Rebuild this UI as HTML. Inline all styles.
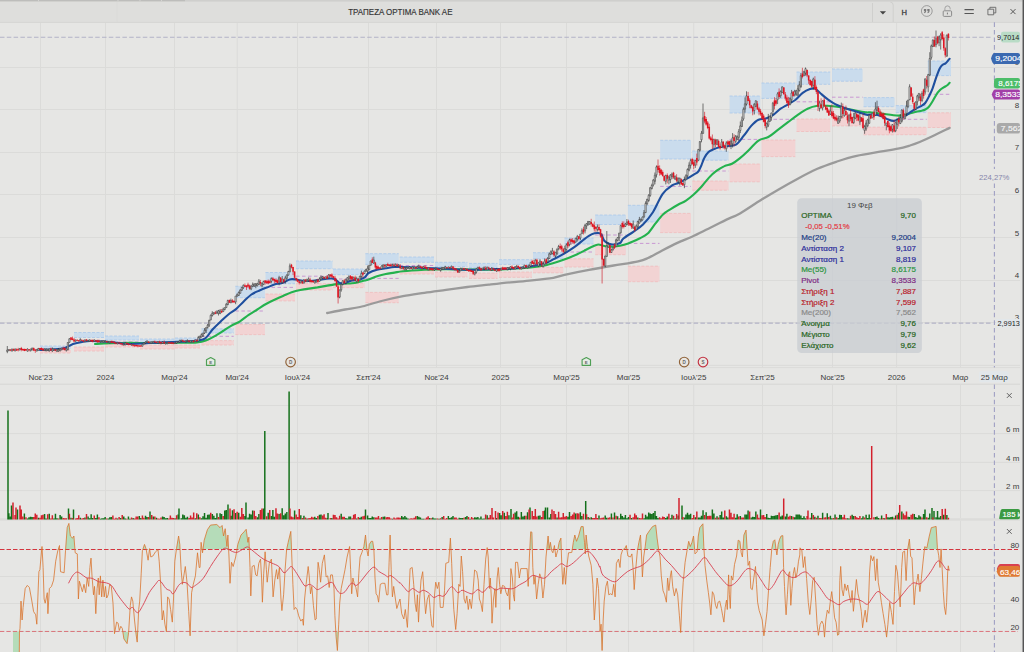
<!DOCTYPE html>
<html lang="el"><head><meta charset="utf-8"><title>ΤΡΑΠΕΖΑ OPTIMA BANK AE</title>
<style>
html,body{margin:0;padding:0;background:#e6e6e4;width:1024px;height:652px;overflow:hidden;font-family:"Liberation Sans", sans-serif;}
svg{display:block;position:absolute;left:0;top:0}
text{font-family:"Liberation Sans", sans-serif;}
</style></head><body>
<svg width="1024" height="652" viewBox="0 0 1024 652" font-family='"Liberation Sans", sans-serif'><rect x="0" y="0" width="1024" height="652" fill="#e6e6e4"/>
<rect x="0" y="0" width="1024" height="22.3" fill="#dededc"/>
<rect x="0" y="0" width="1024" height="1.6" fill="#cfcfcd"/>
<rect x="0" y="0" width="185" height="1.2" fill="#bdbdbb"/>
<path d="M40.5 22.3V367.6M40.5 384.3V518.2M40.5 520.7V652M105.5 22.3V367.6M105.5 384.3V518.2M105.5 520.7V652M174.5 22.3V367.6M174.5 384.3V518.2M174.5 520.7V652M237.2 22.3V367.6M237.2 384.3V518.2M237.2 520.7V652M297.5 22.3V367.6M297.5 384.3V518.2M297.5 520.7V652M368.5 22.3V367.6M368.5 384.3V518.2M368.5 520.7V652M436.5 22.3V367.6M436.5 384.3V518.2M436.5 520.7V652M500.5 22.3V367.6M500.5 384.3V518.2M500.5 520.7V652M566.5 22.3V367.6M566.5 384.3V518.2M566.5 520.7V652M628.5 22.3V367.6M628.5 384.3V518.2M628.5 520.7V652M693.7 22.3V367.6M693.7 384.3V518.2M693.7 520.7V652M762.5 22.3V367.6M762.5 384.3V518.2M762.5 520.7V652M832.5 22.3V367.6M832.5 384.3V518.2M832.5 520.7V652M896.6 22.3V367.6M896.6 384.3V518.2M896.6 520.7V652M960.5 22.3V367.6M960.5 384.3V518.2M960.5 520.7V652M0 322.5H1020.4M0 280.5H1020.4M0 237.5H1020.4M0 194.5H1020.4M0 152.5H1020.4M0 109.5H1020.4M0 67.5H1020.4M0 365.4H1020.4M0 367.6H1020.4M0 405.5H1020.4M0 433.6H1020.4M0 462.4H1020.4M0 490.6H1020.4M0 576.5H1020.4M0 603.5H1020.4" stroke="#dbdbd9" stroke-width="1" fill="none"/>
<path d="M0 384.3H1020.4" stroke="#dbdbd9" stroke-width="1.4"/>
<rect x="0" y="518.2" width="1020.4" height="2.5" fill="#dcdcda"/>
<path d="M0 22.4H1024" stroke="#d6d6d4" stroke-width="1"/>
<path d="M0 37.2H991M0 323.1H992" stroke="#b3b3c6" stroke-width="1.1" stroke-dasharray="4.5 2.3" fill="none"/>
<path d="M994.4 22.3V169M994.4 183.5V367.6M994.4 384.5V652" stroke="#a0a0c4" stroke-width="1.1" stroke-dasharray="4.6 3" fill="none"/>
<rect x="40.0" y="346.0" width="31.0" height="3.0" fill="#c4d9ee" fill-opacity="0.85"/>
<path d="M40.0 346.0h31.0M40.0 349.0h31.0" stroke="#a9c8ea" stroke-width="0.8" stroke-dasharray="3 1.5" fill="none"/>
<rect x="40.0" y="350.0" width="31.0" height="3.0" fill="#f3cfd0" fill-opacity="0.85"/>
<path d="M40.0 350.0h31.0M40.0 353.0h31.0" stroke="#f0bcbc" stroke-width="0.8" stroke-dasharray="3 1.5" fill="none"/>
<rect x="74.0" y="332.5" width="30.0" height="5.0" fill="#c4d9ee" fill-opacity="0.85"/>
<path d="M74.0 332.5h30.0M74.0 337.5h30.0" stroke="#a9c8ea" stroke-width="0.8" stroke-dasharray="3 1.5" fill="none"/>
<rect x="74.0" y="347.0" width="30.0" height="4.0" fill="#f3cfd0" fill-opacity="0.85"/>
<path d="M74.0 347.0h30.0M74.0 351.0h30.0" stroke="#f0bcbc" stroke-width="0.8" stroke-dasharray="3 1.5" fill="none"/>
<rect x="105.0" y="336.0" width="34.0" height="4.0" fill="#c4d9ee" fill-opacity="0.85"/>
<path d="M105.0 336.0h34.0M105.0 340.0h34.0" stroke="#a9c8ea" stroke-width="0.8" stroke-dasharray="3 1.5" fill="none"/>
<rect x="105.0" y="344.0" width="34.0" height="3.0" fill="#f3cfd0" fill-opacity="0.85"/>
<path d="M105.0 344.0h34.0M105.0 347.0h34.0" stroke="#f0bcbc" stroke-width="0.8" stroke-dasharray="3 1.5" fill="none"/>
<path d="M105.0 342.0h34.0" stroke="#c58fd0" stroke-width="0.9" stroke-dasharray="3.5 2.5" fill="none"/>
<rect x="140.0" y="339.0" width="34.5" height="3.5" fill="#c4d9ee" fill-opacity="0.85"/>
<path d="M140.0 339.0h34.5M140.0 342.5h34.5" stroke="#a9c8ea" stroke-width="0.8" stroke-dasharray="3 1.5" fill="none"/>
<rect x="140.0" y="345.0" width="34.5" height="4.0" fill="#f3cfd0" fill-opacity="0.85"/>
<path d="M140.0 345.0h34.5M140.0 349.0h34.5" stroke="#f0bcbc" stroke-width="0.8" stroke-dasharray="3 1.5" fill="none"/>
<rect x="175.0" y="338.0" width="25.0" height="3.0" fill="#c4d9ee" fill-opacity="0.85"/>
<path d="M175.0 338.0h25.0M175.0 341.0h25.0" stroke="#a9c8ea" stroke-width="0.8" stroke-dasharray="3 1.5" fill="none"/>
<rect x="175.0" y="345.0" width="25.0" height="3.0" fill="#f3cfd0" fill-opacity="0.85"/>
<path d="M175.0 345.0h25.0M175.0 348.0h25.0" stroke="#f0bcbc" stroke-width="0.8" stroke-dasharray="3 1.5" fill="none"/>
<rect x="201.5" y="328.8" width="32.2" height="4.2" fill="#c4d9ee" fill-opacity="0.85"/>
<path d="M201.5 328.8h32.2M201.5 333.0h32.2" stroke="#a9c8ea" stroke-width="0.8" stroke-dasharray="3 1.5" fill="none"/>
<rect x="201.5" y="340.6" width="32.2" height="4.4" fill="#f3cfd0" fill-opacity="0.85"/>
<path d="M201.5 340.6h32.2M201.5 345.0h32.2" stroke="#f0bcbc" stroke-width="0.8" stroke-dasharray="3 1.5" fill="none"/>
<path d="M201.5 336.3h32.2" stroke="#c58fd0" stroke-width="0.9" stroke-dasharray="3.5 2.5" fill="none"/>
<rect x="235.4" y="286.3" width="29.5" height="11.4" fill="#c4d9ee" fill-opacity="0.85"/>
<path d="M235.4 286.3h29.5M235.4 297.7h29.5" stroke="#a9c8ea" stroke-width="0.8" stroke-dasharray="3 1.5" fill="none"/>
<rect x="235.4" y="324.5" width="29.5" height="10.1" fill="#f3cfd0" fill-opacity="0.85"/>
<path d="M235.4 324.5h29.5M235.4 334.6h29.5" stroke="#f0bcbc" stroke-width="0.8" stroke-dasharray="3 1.5" fill="none"/>
<path d="M235.4 311.0h29.5" stroke="#c58fd0" stroke-width="0.9" stroke-dasharray="3.5 2.5" fill="none"/>
<rect x="265.5" y="272.5" width="29.5" height="11.2" fill="#c4d9ee" fill-opacity="0.85"/>
<path d="M265.5 272.5h29.5M265.5 283.7h29.5" stroke="#a9c8ea" stroke-width="0.8" stroke-dasharray="3 1.5" fill="none"/>
<rect x="265.5" y="294.0" width="29.5" height="6.9" fill="#f3cfd0" fill-opacity="0.85"/>
<path d="M265.5 294.0h29.5M265.5 300.9h29.5" stroke="#f0bcbc" stroke-width="0.8" stroke-dasharray="3 1.5" fill="none"/>
<path d="M265.5 287.4h29.5" stroke="#c58fd0" stroke-width="0.9" stroke-dasharray="3.5 2.5" fill="none"/>
<rect x="296.0" y="261.0" width="36.5" height="7.7" fill="#c4d9ee" fill-opacity="0.85"/>
<path d="M296.0 261.0h36.5M296.0 268.7h36.5" stroke="#a9c8ea" stroke-width="0.8" stroke-dasharray="3 1.5" fill="none"/>
<rect x="296.0" y="283.7" width="36.5" height="6.3" fill="#f3cfd0" fill-opacity="0.85"/>
<path d="M296.0 283.7h36.5M296.0 290.0h36.5" stroke="#f0bcbc" stroke-width="0.8" stroke-dasharray="3 1.5" fill="none"/>
<path d="M296.0 276.2h36.5" stroke="#c58fd0" stroke-width="0.9" stroke-dasharray="3.5 2.5" fill="none"/>
<rect x="333.0" y="269.0" width="31.7" height="5.7" fill="#c4d9ee" fill-opacity="0.85"/>
<path d="M333.0 269.0h31.7M333.0 274.7h31.7" stroke="#a9c8ea" stroke-width="0.8" stroke-dasharray="3 1.5" fill="none"/>
<rect x="333.0" y="283.3" width="31.7" height="4.3" fill="#f3cfd0" fill-opacity="0.85"/>
<path d="M333.0 283.3h31.7M333.0 287.6h31.7" stroke="#f0bcbc" stroke-width="0.8" stroke-dasharray="3 1.5" fill="none"/>
<path d="M333.0 279.0h31.7" stroke="#c58fd0" stroke-width="0.9" stroke-dasharray="3.5 2.5" fill="none"/>
<rect x="365.4" y="253.7" width="33.3" height="10.7" fill="#c4d9ee" fill-opacity="0.85"/>
<path d="M365.4 253.7h33.3M365.4 264.4h33.3" stroke="#a9c8ea" stroke-width="0.8" stroke-dasharray="3 1.5" fill="none"/>
<rect x="365.4" y="292.4" width="33.3" height="10.3" fill="#f3cfd0" fill-opacity="0.85"/>
<path d="M365.4 292.4h33.3M365.4 302.7h33.3" stroke="#f0bcbc" stroke-width="0.8" stroke-dasharray="3 1.5" fill="none"/>
<path d="M365.4 278.4h33.3" stroke="#c58fd0" stroke-width="0.9" stroke-dasharray="3.5 2.5" fill="none"/>
<rect x="399.7" y="257.0" width="34.3" height="5.3" fill="#c4d9ee" fill-opacity="0.85"/>
<path d="M399.7 257.0h34.3M399.7 262.3h34.3" stroke="#a9c8ea" stroke-width="0.8" stroke-dasharray="3 1.5" fill="none"/>
<rect x="399.7" y="269.8" width="34.3" height="4.2" fill="#f3cfd0" fill-opacity="0.85"/>
<path d="M399.7 269.8h34.3M399.7 274.0h34.3" stroke="#f0bcbc" stroke-width="0.8" stroke-dasharray="3 1.5" fill="none"/>
<path d="M399.7 265.5h34.3" stroke="#c58fd0" stroke-width="0.9" stroke-dasharray="3.5 2.5" fill="none"/>
<rect x="435.0" y="262.3" width="32.4" height="4.3" fill="#c4d9ee" fill-opacity="0.85"/>
<path d="M435.0 262.3h32.4M435.0 266.6h32.4" stroke="#a9c8ea" stroke-width="0.8" stroke-dasharray="3 1.5" fill="none"/>
<rect x="435.0" y="272.0" width="32.4" height="5.0" fill="#f3cfd0" fill-opacity="0.85"/>
<path d="M435.0 272.0h32.4M435.0 277.0h32.4" stroke="#f0bcbc" stroke-width="0.8" stroke-dasharray="3 1.5" fill="none"/>
<rect x="469.0" y="263.4" width="28.5" height="4.3" fill="#c4d9ee" fill-opacity="0.85"/>
<path d="M469.0 263.4h28.5M469.0 267.7h28.5" stroke="#a9c8ea" stroke-width="0.8" stroke-dasharray="3 1.5" fill="none"/>
<rect x="469.0" y="273.0" width="28.5" height="5.4" fill="#f3cfd0" fill-opacity="0.85"/>
<path d="M469.0 273.0h28.5M469.0 278.4h28.5" stroke="#f0bcbc" stroke-width="0.8" stroke-dasharray="3 1.5" fill="none"/>
<rect x="499.0" y="259.7" width="32.9" height="4.7" fill="#c4d9ee" fill-opacity="0.85"/>
<path d="M499.0 259.7h32.9M499.0 264.4h32.9" stroke="#a9c8ea" stroke-width="0.8" stroke-dasharray="3 1.5" fill="none"/>
<rect x="499.0" y="272.0" width="32.9" height="5.3" fill="#f3cfd0" fill-opacity="0.85"/>
<path d="M499.0 272.0h32.9M499.0 277.3h32.9" stroke="#f0bcbc" stroke-width="0.8" stroke-dasharray="3 1.5" fill="none"/>
<rect x="533.0" y="252.7" width="30.3" height="6.1" fill="#c4d9ee" fill-opacity="0.85"/>
<path d="M533.0 252.7h30.3M533.0 258.8h30.3" stroke="#a9c8ea" stroke-width="0.8" stroke-dasharray="3 1.5" fill="none"/>
<rect x="533.0" y="267.4" width="30.3" height="5.4" fill="#f3cfd0" fill-opacity="0.85"/>
<path d="M533.0 267.4h30.3M533.0 272.8h30.3" stroke="#f0bcbc" stroke-width="0.8" stroke-dasharray="3 1.5" fill="none"/>
<rect x="564.5" y="238.0" width="29.0" height="6.0" fill="#c4d9ee" fill-opacity="0.85"/>
<path d="M564.5 238.0h29.0M564.5 244.0h29.0" stroke="#a9c8ea" stroke-width="0.8" stroke-dasharray="3 1.5" fill="none"/>
<rect x="564.5" y="258.8" width="29.0" height="8.2" fill="#f3cfd0" fill-opacity="0.85"/>
<path d="M564.5 258.8h29.0M564.5 267.0h29.0" stroke="#f0bcbc" stroke-width="0.8" stroke-dasharray="3 1.5" fill="none"/>
<path d="M564.5 252.0h29.0" stroke="#c58fd0" stroke-width="0.9" stroke-dasharray="3.5 2.5" fill="none"/>
<rect x="595.2" y="215.0" width="30.7" height="9.5" fill="#c4d9ee" fill-opacity="0.85"/>
<path d="M595.2 215.0h30.7M595.2 224.5h30.7" stroke="#a9c8ea" stroke-width="0.8" stroke-dasharray="3 1.5" fill="none"/>
<rect x="595.2" y="245.3" width="30.7" height="9.4" fill="#f3cfd0" fill-opacity="0.85"/>
<path d="M595.2 245.3h30.7M595.2 254.7h30.7" stroke="#f0bcbc" stroke-width="0.8" stroke-dasharray="3 1.5" fill="none"/>
<path d="M595.2 235.0h30.7" stroke="#c58fd0" stroke-width="0.9" stroke-dasharray="3.5 2.5" fill="none"/>
<rect x="627.9" y="205.3" width="31.6" height="16.7" fill="#c4d9ee" fill-opacity="0.85"/>
<path d="M627.9 205.3h31.6M627.9 222.0h31.6" stroke="#a9c8ea" stroke-width="0.8" stroke-dasharray="3 1.5" fill="none"/>
<rect x="627.9" y="266.2" width="31.6" height="15.5" fill="#f3cfd0" fill-opacity="0.85"/>
<path d="M627.9 266.2h31.6M627.9 281.7h31.6" stroke="#f0bcbc" stroke-width="0.8" stroke-dasharray="3 1.5" fill="none"/>
<path d="M627.9 243.4h31.6" stroke="#c58fd0" stroke-width="0.9" stroke-dasharray="3.5 2.5" fill="none"/>
<rect x="660.2" y="140.3" width="30.8" height="18.7" fill="#c4d9ee" fill-opacity="0.85"/>
<path d="M660.2 140.3h30.8M660.2 159.0h30.8" stroke="#a9c8ea" stroke-width="0.8" stroke-dasharray="3 1.5" fill="none"/>
<rect x="660.2" y="213.4" width="30.8" height="19.2" fill="#f3cfd0" fill-opacity="0.85"/>
<path d="M660.2 213.4h30.8M660.2 232.6h30.8" stroke="#f0bcbc" stroke-width="0.8" stroke-dasharray="3 1.5" fill="none"/>
<path d="M660.2 186.4h30.8" stroke="#c58fd0" stroke-width="0.9" stroke-dasharray="3.5 2.5" fill="none"/>
<rect x="692.3" y="151.0" width="36.3" height="9.2" fill="#c4d9ee" fill-opacity="0.85"/>
<path d="M692.3 151.0h36.3M692.3 160.2h36.3" stroke="#a9c8ea" stroke-width="0.8" stroke-dasharray="3 1.5" fill="none"/>
<rect x="692.3" y="181.0" width="36.3" height="9.2" fill="#f3cfd0" fill-opacity="0.85"/>
<path d="M692.3 181.0h36.3M692.3 190.2h36.3" stroke="#f0bcbc" stroke-width="0.8" stroke-dasharray="3 1.5" fill="none"/>
<path d="M692.3 171.0h36.3" stroke="#c58fd0" stroke-width="0.9" stroke-dasharray="3.5 2.5" fill="none"/>
<rect x="729.6" y="96.0" width="30.6" height="17.0" fill="#c4d9ee" fill-opacity="0.85"/>
<path d="M729.6 96.0h30.6M729.6 113.0h30.6" stroke="#a9c8ea" stroke-width="0.8" stroke-dasharray="3 1.5" fill="none"/>
<rect x="729.6" y="164.0" width="30.6" height="17.8" fill="#f3cfd0" fill-opacity="0.85"/>
<path d="M729.6 164.0h30.6M729.6 181.8h30.6" stroke="#f0bcbc" stroke-width="0.8" stroke-dasharray="3 1.5" fill="none"/>
<path d="M729.6 139.4h30.6" stroke="#c58fd0" stroke-width="0.9" stroke-dasharray="3.5 2.5" fill="none"/>
<rect x="761.5" y="83.0" width="33.8" height="15.4" fill="#c4d9ee" fill-opacity="0.85"/>
<path d="M761.5 83.0h33.8M761.5 98.4h33.8" stroke="#a9c8ea" stroke-width="0.8" stroke-dasharray="3 1.5" fill="none"/>
<rect x="761.5" y="140.0" width="33.8" height="16.6" fill="#f3cfd0" fill-opacity="0.85"/>
<path d="M761.5 140.0h33.8M761.5 156.6h33.8" stroke="#f0bcbc" stroke-width="0.8" stroke-dasharray="3 1.5" fill="none"/>
<path d="M761.5 119.3h33.8" stroke="#c58fd0" stroke-width="0.9" stroke-dasharray="3.5 2.5" fill="none"/>
<rect x="796.6" y="72.0" width="33.6" height="12.3" fill="#c4d9ee" fill-opacity="0.85"/>
<path d="M796.6 72.0h33.6M796.6 84.3h33.6" stroke="#a9c8ea" stroke-width="0.8" stroke-dasharray="3 1.5" fill="none"/>
<rect x="796.6" y="119.0" width="33.6" height="12.5" fill="#f3cfd0" fill-opacity="0.85"/>
<path d="M796.6 119.0h33.6M796.6 131.5h33.6" stroke="#f0bcbc" stroke-width="0.8" stroke-dasharray="3 1.5" fill="none"/>
<path d="M796.6 101.8h33.6" stroke="#c58fd0" stroke-width="0.9" stroke-dasharray="3.5 2.5" fill="none"/>
<rect x="832.0" y="69.0" width="30.6" height="12.2" fill="#c4d9ee" fill-opacity="0.85"/>
<path d="M832.0 69.0h30.6M832.0 81.2h30.6" stroke="#a9c8ea" stroke-width="0.8" stroke-dasharray="3 1.5" fill="none"/>
<rect x="832.0" y="117.3" width="30.6" height="8.6" fill="#f3cfd0" fill-opacity="0.85"/>
<path d="M832.0 117.3h30.6M832.0 125.9h30.6" stroke="#f0bcbc" stroke-width="0.8" stroke-dasharray="3 1.5" fill="none"/>
<path d="M832.0 97.2h30.6" stroke="#c58fd0" stroke-width="0.9" stroke-dasharray="3.5 2.5" fill="none"/>
<rect x="863.6" y="97.6" width="31.0" height="9.1" fill="#c4d9ee" fill-opacity="0.85"/>
<path d="M863.6 97.6h31.0M863.6 106.7h31.0" stroke="#a9c8ea" stroke-width="0.8" stroke-dasharray="3 1.5" fill="none"/>
<rect x="863.6" y="127.2" width="31.0" height="7.6" fill="#f3cfd0" fill-opacity="0.85"/>
<path d="M863.6 127.2h31.0M863.6 134.8h31.0" stroke="#f0bcbc" stroke-width="0.8" stroke-dasharray="3 1.5" fill="none"/>
<rect x="895.8" y="105.6" width="30.9" height="7.0" fill="#c4d9ee" fill-opacity="0.85"/>
<path d="M895.8 105.6h30.9M895.8 112.6h30.9" stroke="#a9c8ea" stroke-width="0.8" stroke-dasharray="3 1.5" fill="none"/>
<rect x="895.8" y="127.3" width="30.9" height="7.4" fill="#f3cfd0" fill-opacity="0.85"/>
<path d="M895.8 127.3h30.9M895.8 134.7h30.9" stroke="#f0bcbc" stroke-width="0.8" stroke-dasharray="3 1.5" fill="none"/>
<path d="M895.8 119.3h30.9" stroke="#c58fd0" stroke-width="0.9" stroke-dasharray="3.5 2.5" fill="none"/>
<rect x="927.8" y="61.0" width="23.2" height="14.6" fill="#c4d9ee" fill-opacity="0.85"/>
<path d="M927.8 61.0h23.2M927.8 75.6h23.2" stroke="#a9c8ea" stroke-width="0.8" stroke-dasharray="3 1.5" fill="none"/>
<rect x="927.8" y="112.8" width="23.2" height="14.7" fill="#f3cfd0" fill-opacity="0.85"/>
<path d="M927.8 112.8h23.2M927.8 127.5h23.2" stroke="#f0bcbc" stroke-width="0.8" stroke-dasharray="3 1.5" fill="none"/>
<path d="M927.8 94.3h23.2" stroke="#c58fd0" stroke-width="0.9" stroke-dasharray="3.5 2.5" fill="none"/>
<path d="M327.2 313.0C330.2 312.4 339.5 310.5 345.0 309.5C350.5 308.5 353.9 308.4 360.0 307.0C366.1 305.6 374.3 302.8 381.5 301.0C388.7 299.2 395.9 297.6 403.0 296.2C410.1 294.8 417.2 293.9 424.4 292.8C431.6 291.7 438.8 290.8 446.0 289.8C453.2 288.8 460.2 287.9 467.4 287.0C474.5 286.1 481.7 285.4 488.9 284.6C496.1 283.8 503.2 283.0 510.4 282.3C517.6 281.6 524.8 281.1 531.9 280.3C539.0 279.6 547.9 278.7 553.3 277.8C558.7 276.9 558.5 276.1 564.5 274.8C570.5 273.5 580.9 271.4 589.1 269.9C597.3 268.3 605.4 266.9 613.6 265.5C621.8 264.1 632.5 262.6 638.2 261.3C643.9 260.1 643.9 259.9 648.0 258.0C652.1 256.1 657.8 252.7 662.7 250.2C667.6 247.7 672.5 245.2 677.4 242.9C682.3 240.7 686.3 239.3 692.0 236.7C697.7 234.0 706.0 229.8 711.8 227.0C717.5 224.2 721.8 221.9 726.5 219.6C731.2 217.3 734.2 216.7 740.0 213.4C745.8 210.1 754.6 203.9 761.0 200.0C767.4 196.1 772.1 193.2 778.2 189.7C784.3 186.1 791.3 182.2 797.8 178.7C804.3 175.2 810.9 171.7 817.4 168.8C823.9 165.9 830.5 163.7 837.0 161.5C843.5 159.3 849.5 157.4 856.7 155.8C863.9 154.2 873.1 152.9 880.0 151.7C886.9 150.5 893.0 149.7 898.0 148.7C903.0 147.7 906.4 146.6 910.0 145.5C913.6 144.4 915.6 143.7 919.7 142.0C923.8 140.3 929.5 137.7 934.5 135.3C939.5 133.0 947.1 129.1 949.6 127.9" stroke="#9a9a9a" stroke-width="2.3" fill="none" stroke-linejoin="round" stroke-linecap="round"/>
<path d="M95.0 344.0C99.2 343.8 110.8 343.2 120.0 343.0C129.2 342.8 140.0 343.0 150.0 343.0C160.0 343.0 172.2 342.9 180.0 342.8C187.8 342.7 192.7 342.8 197.0 342.4C201.3 342.0 202.9 341.6 205.8 340.6C208.7 339.6 211.5 337.9 214.4 336.3C217.3 334.7 220.2 332.8 223.0 331.0C225.8 329.2 228.7 327.2 231.5 325.6C234.3 324.0 237.1 323.1 240.0 321.3C242.9 319.5 245.8 316.9 248.7 314.9C251.6 312.9 254.4 311.3 257.3 309.5C260.2 307.7 263.1 305.6 266.0 304.0C268.9 302.4 271.7 301.1 274.5 299.8C277.3 298.5 280.1 297.2 283.0 296.0C285.9 294.8 288.8 293.3 291.7 292.3C294.6 291.3 297.4 290.6 300.3 290.0C303.2 289.4 306.1 289.0 309.0 288.6C311.9 288.2 314.7 287.8 317.5 287.4C320.3 286.9 323.1 286.4 326.0 285.9C328.9 285.4 331.8 284.8 334.7 284.4C337.6 284.0 340.4 283.9 343.3 283.7C346.2 283.5 349.4 283.6 351.9 283.3C354.4 283.1 356.2 282.7 358.3 282.2C360.4 281.7 363.0 280.9 364.7 280.5C366.4 280.1 366.6 280.2 368.6 279.5C370.7 278.8 374.1 277.2 377.0 276.3C379.9 275.4 382.9 274.6 385.8 274.0C388.7 273.4 391.5 273.1 394.4 272.6C397.3 272.2 398.0 271.8 403.0 271.3C408.0 270.8 417.2 270.2 424.4 269.8C431.6 269.4 438.8 269.2 446.0 269.2C453.2 269.2 460.2 269.5 467.4 269.6C474.5 269.7 483.5 269.6 488.9 269.6C494.3 269.6 493.0 269.8 500.0 269.4C507.0 269.0 523.0 268.2 530.7 267.5C538.4 266.8 540.9 266.3 546.0 265.2C551.1 264.1 556.3 262.4 561.4 260.6C566.5 258.8 572.9 256.2 576.7 254.5C580.5 252.8 581.9 251.9 584.4 250.6C586.9 249.3 589.7 247.8 592.0 246.8C594.3 245.8 596.2 244.6 598.2 244.5C600.2 244.4 602.2 245.6 604.3 246.0C606.3 246.4 607.9 246.9 610.5 246.8C613.1 246.8 617.0 246.3 620.0 245.7C623.0 245.1 626.0 244.2 628.3 243.4C630.6 242.6 632.0 241.9 634.0 241.0C636.0 240.1 637.7 239.4 640.0 238.2C642.3 237.0 645.2 236.0 647.7 233.6C650.2 231.2 652.8 226.9 655.3 223.7C657.8 220.5 660.4 216.8 663.0 214.4C665.6 212.0 668.1 210.8 670.7 209.1C673.3 207.4 675.9 205.9 678.4 204.5C680.9 203.1 683.5 202.3 686.0 200.6C688.5 198.9 691.1 196.8 693.7 194.5C696.3 192.2 698.9 189.6 701.4 186.8C703.9 184.0 706.5 180.3 709.0 177.6C711.5 174.9 714.1 172.6 716.7 170.7C719.3 168.8 721.9 167.2 724.4 166.1C726.9 164.9 729.5 165.1 732.0 163.8C734.5 162.5 737.1 160.5 739.7 158.4C742.3 156.3 744.3 154.5 747.4 151.5C750.5 148.5 755.0 143.0 758.5 140.6C762.0 138.2 765.0 138.8 768.3 137.0C771.6 135.2 774.9 132.1 778.2 129.6C781.5 127.1 784.7 124.7 788.0 122.2C791.3 119.7 794.5 117.0 797.8 114.8C801.1 112.5 804.3 110.2 807.6 108.7C810.9 107.2 814.1 106.3 817.4 105.8C820.7 105.3 823.9 105.6 827.2 105.8C830.5 106.0 833.7 106.2 837.0 106.7C840.3 107.2 843.6 108.0 846.9 108.7C850.2 109.4 853.4 110.1 856.7 110.7C860.0 111.3 864.3 112.2 866.5 112.4C868.7 112.7 868.2 112.1 870.0 112.2C871.8 112.3 874.9 112.9 877.4 113.2C879.9 113.5 882.2 113.7 884.7 114.0C887.2 114.3 889.6 114.7 892.1 115.0C894.6 115.3 897.0 115.7 899.5 115.6C902.0 115.5 904.3 115.0 906.8 114.4C909.2 113.8 911.7 112.8 914.2 112.2C916.7 111.6 919.8 111.2 921.6 110.8C923.4 110.3 924.0 110.2 925.2 109.5C926.4 108.8 927.7 108.1 928.9 106.7C930.1 105.3 931.4 103.2 932.6 101.2C933.8 99.2 935.1 96.6 936.3 94.7C937.5 92.8 938.8 91.3 940.0 90.1C941.2 88.9 942.5 88.2 943.7 87.4C944.9 86.6 946.3 86.0 947.3 85.2C948.3 84.4 949.2 83.2 949.6 82.8" stroke="#24b24e" stroke-width="2.1" fill="none" stroke-linejoin="round" stroke-linecap="round"/>
<path d="M40.0 350.0C42.5 349.9 50.8 349.6 55.0 349.3C59.2 349.0 62.5 348.6 65.0 348.0C67.5 347.4 68.3 346.2 70.0 345.5C71.7 344.8 71.7 344.2 75.0 343.5C78.3 342.8 84.2 341.2 90.0 341.0C95.8 340.8 103.3 341.5 110.0 342.0C116.7 342.5 123.3 343.8 130.0 344.0C136.7 344.2 141.7 343.4 150.0 343.0C158.3 342.6 173.3 342.0 180.0 341.7C186.7 341.4 187.1 341.5 190.0 341.3C192.9 341.1 195.1 341.1 197.7 340.6C200.2 340.1 202.8 340.2 205.3 338.3C207.9 336.4 210.4 331.8 213.0 329.0C215.6 326.2 218.1 323.8 220.7 321.4C223.3 319.0 225.8 316.6 228.4 314.5C231.0 312.4 233.4 311.3 236.0 309.1C238.6 306.9 241.1 303.8 243.7 301.4C246.3 299.0 248.8 296.3 251.4 294.5C254.0 292.7 256.4 291.8 259.0 290.7C261.6 289.6 264.1 288.6 266.7 287.6C269.3 286.6 271.8 285.3 274.4 284.5C276.9 283.7 279.4 283.9 282.0 283.0C284.6 282.1 287.4 280.0 289.7 279.4C292.0 278.8 293.5 279.2 296.0 279.5C298.5 279.8 301.8 280.8 304.6 281.0C307.4 281.2 310.1 281.0 313.0 280.7C315.9 280.4 318.9 279.8 321.8 279.4C324.7 279.0 328.2 278.6 330.4 278.5C332.5 278.4 333.3 278.3 334.7 279.0C336.1 279.7 337.6 281.9 339.0 282.6C340.4 283.3 341.2 283.7 343.3 283.3C345.4 282.9 349.4 281.1 351.9 280.5C354.4 279.9 356.2 280.3 358.3 279.8C360.4 279.3 363.0 278.4 364.7 277.3C366.4 276.2 366.6 274.2 368.6 273.0C370.7 271.8 374.1 270.6 377.0 269.8C379.9 269.0 382.9 268.8 385.8 268.3C388.7 267.8 391.5 267.2 394.4 267.0C397.3 266.8 398.0 266.8 403.0 267.0C408.0 267.2 417.2 267.7 424.4 268.0C431.6 268.3 438.8 268.4 446.0 268.7C453.2 269.0 460.2 269.7 467.4 269.8C474.5 269.9 483.5 269.3 488.9 269.2C494.3 269.1 495.6 269.1 500.0 269.0C504.4 268.9 510.2 268.8 515.3 268.3C520.4 267.9 525.6 267.2 530.7 266.3C535.8 265.4 542.2 264.1 546.0 262.9C549.8 261.7 551.1 260.4 553.7 259.1C556.3 257.8 558.9 256.6 561.4 255.2C563.9 253.8 566.5 252.2 569.0 250.6C571.5 248.9 574.1 247.2 576.7 245.3C579.3 243.4 581.9 241.0 584.4 239.1C586.9 237.2 589.7 235.1 592.0 234.1C594.3 233.1 596.7 232.9 598.2 233.0C599.8 233.1 600.3 233.2 601.3 234.5C602.3 235.8 603.0 239.2 604.3 240.7C605.6 242.2 607.4 243.1 608.9 243.7C610.4 244.3 611.6 244.6 613.5 244.5C615.4 244.4 618.4 244.0 620.0 243.0C621.6 242.0 621.2 240.4 623.4 238.5C625.6 236.6 630.0 234.1 633.3 231.8C636.6 229.5 639.7 227.8 643.0 224.5C646.3 221.2 649.6 217.3 652.9 212.2C656.2 207.1 659.4 198.3 662.7 193.8C666.0 189.3 669.9 187.0 672.5 185.2C675.1 183.4 676.1 184.0 678.4 183.0C680.6 182.0 683.5 180.6 686.0 179.2C688.5 177.8 691.7 175.9 693.7 174.6C695.8 173.3 697.0 173.1 698.3 171.5C699.6 169.9 700.4 167.6 701.4 165.3C702.4 163.0 703.2 159.9 704.4 157.7C705.5 155.5 707.0 153.6 708.3 152.3C709.6 151.0 710.3 150.8 712.1 150.0C713.9 149.2 716.5 147.9 719.3 147.2C722.1 146.5 726.1 146.5 729.0 146.0C731.9 145.5 733.9 146.0 736.4 144.3C738.9 142.6 741.3 138.8 743.8 135.7C746.3 132.6 748.8 128.6 751.2 125.9C753.7 123.2 756.0 121.0 758.5 119.8C761.0 118.6 763.4 119.3 765.9 118.5C768.4 117.7 770.8 116.4 773.3 114.8C775.8 113.2 778.1 110.5 780.6 108.7C783.1 107.0 785.5 105.8 788.0 104.3C790.5 102.8 792.8 101.9 795.3 100.0C797.8 98.1 800.2 94.6 802.7 92.8C805.2 91.0 808.0 89.7 810.0 89.0C812.0 88.3 813.4 88.0 815.0 88.6C816.6 89.2 817.9 91.1 819.9 92.8C821.9 94.5 824.4 96.9 827.2 98.9C830.1 100.9 833.7 103.4 837.0 105.0C840.3 106.6 843.6 107.6 846.9 108.7C850.2 109.8 853.4 110.7 856.7 111.7C860.0 112.7 864.3 114.3 866.5 114.8C868.7 115.3 868.2 114.5 870.0 114.5C871.8 114.5 875.2 114.6 877.4 115.0C879.5 115.4 881.1 116.0 882.9 116.8C884.7 117.6 886.6 118.9 888.4 119.6C890.2 120.3 892.0 121.1 893.9 120.9C895.8 120.8 897.6 119.5 899.5 118.7C901.4 117.9 903.2 117.0 905.0 115.9C906.8 114.8 908.7 113.4 910.5 112.2C912.3 111.0 914.1 109.7 916.0 108.6C917.9 107.5 920.1 106.7 921.6 105.8C923.1 104.9 924.0 104.5 925.2 103.0C926.4 101.5 927.7 99.0 928.9 96.6C930.1 94.1 931.4 91.5 932.6 88.3C933.8 85.1 935.1 80.6 936.3 77.2C937.5 73.8 938.9 70.1 940.0 68.0C941.1 65.9 941.8 65.5 942.7 64.7C943.6 63.9 944.6 64.1 945.5 63.4C946.4 62.7 947.6 61.1 948.3 60.3C949.0 59.5 949.4 59.0 949.6 58.8" stroke="#1f4f9e" stroke-width="2.1" fill="none" stroke-linejoin="round" stroke-linecap="round"/>
<path d="M7.3 346.0V353.2M8.9 349.4V350.9M12.0 348.4V351.7M15.1 348.4V351.3M19.7 348.4V350.2M27.5 348.4V351.5M30.6 348.8V351.4M32.1 347.5V350.1M36.8 349.2V351.4M38.4 347.9V350.6M44.6 348.3V350.9M46.1 348.2V351.3M47.7 348.8V350.7M49.2 348.4V351.8M52.3 347.4V352.1M53.9 348.5V350.8M57.0 349.0V352.1M58.5 348.1V351.8M60.1 348.3V351.5M61.7 348.0V350.3M66.3 348.4V351.6M67.9 342.3V350.6M69.4 338.1V342.5M75.6 339.6V341.7M80.3 338.2V341.5M84.9 339.7V342.4M88.1 340.1V341.7M89.6 339.5V341.8M94.3 339.6V341.5M100.5 340.9V342.4M102.0 340.2V342.3M103.6 340.6V342.6M105.1 340.3V342.3M108.2 340.8V342.8M109.8 341.0V343.5M117.6 342.3V344.3M123.8 344.0V345.5M125.3 342.5V345.4M131.5 343.4V345.5M142.4 344.1V346.4M144.0 342.4V344.4M145.5 341.2V344.1M147.1 340.7V342.7M150.2 341.7V343.5M151.7 341.4V343.5M153.3 341.0V343.0M157.9 341.3V343.5M162.6 341.2V343.9M165.7 342.2V344.6M167.3 342.1V344.4M175.0 342.0V344.0M176.6 341.1V343.8M178.1 341.4V342.9M179.7 339.7V342.4M181.2 339.7V341.6M185.9 340.6V342.7M187.4 339.3V341.8M190.6 340.5V342.7M192.1 340.5V342.4M195.2 339.4V341.9M198.3 335.9V341.1M199.9 335.8V339.0M201.4 333.4V337.5M203.0 333.0V336.9M204.5 328.1V334.0M206.1 327.4V333.0M207.6 324.0V328.5M209.2 319.7V327.0M210.7 314.5V320.3M212.3 311.2V316.6M213.8 312.3V314.9M217.0 310.2V314.1M218.5 309.9V315.5M220.1 309.0V314.2M223.2 307.7V311.8M224.7 307.6V310.3M226.3 303.1V307.7M227.8 299.7V305.3M230.9 298.6V303.4M235.6 296.0V304.2M237.1 293.4V296.4M238.7 291.5V295.7M240.2 289.3V293.4M241.8 286.9V291.0M243.4 284.4V288.9M251.1 285.3V290.2M252.7 282.5V287.2M254.2 283.5V286.9M255.8 283.1V288.2M257.3 282.8V286.5M258.9 279.0V284.9M262.0 282.7V287.3M263.5 280.8V284.9M271.3 277.3V283.2M279.1 275.8V285.3M282.2 276.0V283.9M285.3 275.9V283.7M286.8 274.4V279.7M288.4 270.8V275.4M289.9 263.5V271.9M300.8 280.3V283.7M303.9 279.2V283.3M307.0 278.6V282.3M308.6 277.3V281.5M314.8 280.4V283.5M316.3 279.4V282.8M319.5 277.2V281.9M321.0 275.4V280.2M322.6 276.2V278.8M325.7 276.7V278.9M328.8 274.0V278.1M339.6 289.5V298.3M341.2 284.3V291.7M342.7 280.1V285.4M345.9 278.6V284.3M347.4 277.2V281.4M349.0 275.2V281.2M353.6 276.7V279.2M356.7 276.7V282.5M359.8 275.9V280.9M361.4 270.6V277.9M364.5 270.5V274.0M366.0 268.7V271.5M367.6 265.6V273.7M369.1 264.9V270.1M370.7 260.7V265.8M373.8 256.7V264.0M381.6 265.3V269.3M383.1 264.4V268.0M386.2 264.3V267.0M392.4 263.6V266.3M395.5 263.6V266.5M398.7 264.0V266.8M401.8 266.8V269.1M404.9 267.5V270.4M406.4 266.7V270.1M408.0 267.0V268.9M409.5 266.2V269.2M412.6 266.4V269.5M414.2 266.5V268.2M417.3 265.5V268.6M418.8 264.6V268.1M423.5 265.9V268.6M428.2 267.6V270.4M434.4 268.2V271.0M435.9 267.8V269.8M440.6 268.2V271.7M442.1 266.9V270.0M443.7 266.9V269.9M445.2 265.8V268.9M448.4 266.6V268.6M451.5 265.6V268.1M459.2 269.5V272.5M460.8 267.5V271.0M462.3 267.9V269.8M465.4 268.4V270.1M474.8 272.0V275.4M476.3 268.4V273.6M477.9 266.9V269.0M482.5 268.0V269.8M484.1 266.4V270.1M487.2 266.7V269.8M491.8 267.0V270.9M496.5 268.4V271.7M501.2 267.7V270.4M507.4 267.3V270.3M508.9 267.1V269.4M510.5 266.3V270.3M515.1 266.0V269.3M516.7 264.8V268.7M521.3 267.6V269.4M522.9 266.8V269.0M524.4 264.7V268.5M527.6 265.9V268.5M529.1 264.1V267.8M530.7 262.0V266.7M535.3 258.9V264.6M538.4 262.0V267.0M540.0 259.2V265.5M543.1 261.7V267.5M544.6 258.5V264.6M547.7 257.0V263.2M549.3 252.6V258.8M550.8 250.4V254.9M552.4 247.9V254.5M555.5 251.9V257.4M557.1 248.2V254.4M558.6 244.9V250.3M564.8 245.7V252.7M566.4 243.2V250.8M569.5 238.7V246.3M575.7 237.8V242.9M577.3 234.9V241.5M580.4 234.0V240.1M581.9 228.4V233.8M585.0 223.8V233.4M586.6 223.2V229.1M588.1 221.1V225.5M589.7 221.2V224.6M597.4 224.5V231.5M605.2 255.7V267.3M606.8 231.0V256.8M608.3 242.4V247.1M611.4 248.7V252.8M613.0 247.0V250.5M616.1 238.7V246.9M617.6 237.0V241.3M619.2 232.8V241.3M620.7 224.7V233.7M625.4 223.2V227.0M626.9 219.0V225.2M633.2 220.5V229.0M636.3 224.4V229.6M637.8 220.7V227.7M639.4 216.9V223.4M640.9 218.5V222.1M642.5 216.5V220.7M644.0 210.0V218.1M645.6 201.3V212.8M647.1 198.9V205.2M648.7 194.2V201.9M650.2 187.3V196.8M651.8 183.7V189.4M653.3 179.1V186.5M654.9 172.5V184.3M656.5 165.4V177.5M665.8 174.6V184.4M668.9 175.7V184.3M670.4 174.2V183.0M672.0 172.5V179.1M675.1 175.7V179.9M678.2 177.4V182.8M679.7 177.7V185.5M684.4 176.6V188.2M686.0 174.2V180.1M687.5 168.4V177.3M689.1 162.3V171.4M690.6 158.7V168.6M695.3 159.7V167.9M698.4 149.2V161.2M699.9 141.0V151.7M701.5 130.9V142.3M703.0 103.5V133.7M713.9 138.6V148.0M717.0 139.0V145.2M721.7 139.0V147.8M726.3 141.2V151.8M731.0 140.0V149.1M732.6 133.1V147.5M735.7 135.0V143.1M737.2 135.4V140.2M738.8 129.1V141.0M740.3 121.5V133.1M741.9 116.5V126.9M743.4 107.4V120.7M745.0 97.4V112.6M746.5 91.3V105.6M754.3 103.1V114.5M755.8 100.3V106.8M766.7 122.3V130.4M768.3 113.9V127.1M769.8 115.8V121.8M771.4 112.6V120.7M772.9 101.9V114.7M777.6 92.2V104.1M780.7 90.3V97.9M782.2 86.5V92.8M790.0 97.3V105.3M791.6 89.9V102.7M794.7 89.8V96.4M796.2 90.0V96.1M797.8 85.2V96.1M799.3 81.2V91.6M800.9 73.1V87.8M804.0 70.7V75.9M805.5 67.5V75.6M813.3 77.6V89.7M819.5 100.7V111.5M822.6 100.5V110.5M830.4 106.6V115.0M838.2 115.6V123.8M839.7 116.2V122.8M841.3 102.6V118.5M844.4 108.7V116.7M849.0 113.9V126.3M853.7 112.8V123.9M855.2 111.7V119.3M859.9 112.4V124.9M864.6 124.8V133.8M866.1 120.2V130.8M867.7 118.7V127.2M869.2 114.2V123.6M872.3 113.0V118.2M875.4 102.2V115.5M877.0 100.7V114.0M886.3 122.9V130.3M892.5 124.1V132.5M895.6 122.4V132.2M897.2 118.6V129.0M900.3 114.0V124.1M901.8 109.3V122.5M904.9 113.2V119.1M906.5 100.8V116.2M908.0 99.9V108.2M909.6 84.3V100.1M915.8 101.1V110.2M917.4 94.8V105.5M918.9 92.9V100.8M922.0 91.3V102.2M925.1 78.1V94.6M928.2 73.9V92.2M929.8 52.2V76.1M931.3 44.5V59.6M932.9 39.3V47.1M936.0 30.5V47.3M939.1 35.6V46.2M940.7 33.2V49.5M946.9 34.5V57.0" stroke="#2e2e2e" stroke-width="0.65" fill="none"/>
<path d="M10.4 349.3V351.2M13.5 348.5V350.9M16.6 348.4V351.0M18.2 347.8V351.4M21.3 346.9V351.3M22.8 348.5V350.7M24.4 348.6V351.2M25.9 348.8V350.8M29.0 349.1V351.5M33.7 347.4V351.1M35.3 349.4V352.8M39.9 347.9V349.9M41.5 347.4V350.0M43.0 348.4V350.7M50.8 347.7V350.9M55.4 349.2V351.2M63.2 346.6V350.0M64.8 346.8V350.6M71.0 337.0V340.3M72.5 336.6V340.3M74.1 338.1V342.2M77.2 339.1V341.1M78.7 340.1V341.5M81.8 339.3V341.1M83.4 339.8V342.1M86.5 339.1V341.1M91.2 339.5V341.6M92.7 339.4V342.3M95.8 339.9V342.0M97.4 339.7V342.8M98.9 339.6V342.7M106.7 340.9V342.6M111.4 340.6V343.0M112.9 340.6V342.8M114.5 341.3V343.7M116.0 342.0V344.1M119.1 342.1V343.9M120.7 342.7V344.6M122.2 342.7V345.6M126.9 342.2V344.9M128.4 343.4V345.4M130.0 344.0V345.2M133.1 344.2V346.4M134.6 344.6V346.6M136.2 344.7V346.4M137.8 345.0V347.2M139.3 345.2V346.8M140.9 345.0V347.0M148.6 341.2V343.2M154.8 340.5V342.6M156.4 341.2V343.2M159.5 340.7V343.6M161.0 341.6V344.6M164.2 340.4V344.0M168.8 341.7V343.7M170.4 342.5V344.0M171.9 341.9V344.1M173.5 342.6V344.2M182.8 339.5V342.2M184.3 340.8V342.1M189.0 340.2V342.5M193.7 340.5V342.7M196.8 339.2V342.4M215.4 310.9V314.2M221.6 309.0V312.9M229.4 299.5V303.0M232.5 299.2V302.7M234.0 300.1V302.6M244.9 283.5V287.0M246.5 285.2V290.0M248.0 282.7V287.9M249.6 284.6V289.7M260.4 279.9V286.2M265.1 280.0V284.7M266.7 280.1V284.0M268.2 279.5V284.3M269.8 279.8V283.6M272.9 277.0V280.7M274.4 278.6V283.4M276.0 278.3V283.1M277.5 279.5V283.5M280.6 277.0V282.6M283.7 278.8V283.3M291.5 263.9V268.4M293.1 266.8V275.1M294.6 271.3V278.6M296.2 277.6V281.5M297.7 278.8V282.3M299.3 280.4V284.4M302.4 281.0V284.0M305.5 279.3V282.3M310.1 277.7V282.8M311.7 280.1V282.4M313.2 280.4V282.8M317.9 278.7V283.6M324.1 276.4V278.7M327.2 275.1V279.0M330.3 274.1V276.7M331.9 273.4V278.2M333.4 275.9V278.2M335.0 275.9V281.8M336.5 278.5V286.8M338.1 285.2V303.5M344.3 278.9V283.4M350.5 275.0V280.2M352.1 276.1V281.4M355.2 275.7V281.4M358.3 278.4V282.6M362.9 272.4V277.5M372.3 257.3V263.2M375.4 261.8V269.4M376.9 264.8V269.8M378.5 265.7V269.1M380.0 267.2V269.3M384.7 264.1V268.1M387.8 262.7V266.4M389.3 264.0V266.6M390.9 263.5V266.4M394.0 263.3V266.7M397.1 263.4V266.9M400.2 264.1V269.2M403.3 266.0V269.9M411.1 267.0V268.9M415.7 266.9V269.1M420.4 266.0V267.6M422.0 266.1V269.7M425.1 265.3V268.8M426.6 266.6V269.7M429.7 267.3V270.7M431.3 268.0V270.4M432.8 267.9V270.6M437.5 268.1V270.2M439.0 268.9V270.6M446.8 266.9V268.6M449.9 266.8V268.7M453.0 266.1V269.9M454.6 267.7V270.5M456.1 268.1V271.3M457.7 269.6V272.7M463.9 267.8V270.0M467.0 268.0V270.9M468.5 269.8V271.9M470.1 269.3V271.9M471.6 270.0V272.0M473.2 270.2V275.0M479.4 266.4V269.5M481.0 267.7V270.8M485.6 266.3V270.0M488.7 266.7V269.3M490.3 268.4V271.0M493.4 267.9V270.4M494.9 268.8V271.2M498.0 268.3V271.9M499.6 268.3V271.4M502.7 266.7V270.0M504.3 267.4V269.7M505.8 267.4V269.7M512.0 265.4V268.5M513.6 266.9V269.8M518.2 265.3V268.4M519.8 266.8V269.8M526.0 264.7V268.4M532.2 259.8V263.9M533.8 259.8V266.7M536.9 258.7V264.9M541.5 261.1V267.0M546.2 258.3V264.3M554.0 250.3V256.9M560.2 243.5V250.0M561.7 244.8V251.7M563.3 247.9V253.4M567.9 240.8V248.0M571.0 238.3V244.7M572.6 238.1V243.6M574.1 240.3V244.1M578.8 235.9V240.4M583.5 226.7V234.5M591.2 218.8V226.6M592.8 223.0V227.3M594.3 221.5V231.5M595.9 226.0V231.9M599.0 224.3V231.2M600.5 228.8V237.7M602.1 233.4V283.5M603.7 258.5V266.3M609.9 245.0V253.2M614.5 243.5V249.0M622.3 221.4V228.5M623.8 221.4V228.4M628.5 219.7V225.9M630.1 222.3V225.8M631.6 223.2V229.0M634.7 225.8V231.6M658.0 159.5V172.4M659.6 165.4V175.6M661.1 168.9V174.8M662.7 170.4V176.6M664.2 175.3V181.4M667.3 173.4V183.3M673.5 171.9V178.8M676.6 174.2V182.2M681.3 178.4V184.8M682.9 182.6V185.8M692.2 157.8V165.0M693.7 159.4V169.2M696.8 153.6V165.6M704.6 111.8V123.3M706.1 117.0V125.6M707.7 121.0V129.2M709.3 123.8V139.6M710.8 136.2V141.3M712.4 134.5V149.0M715.5 138.8V147.2M718.6 139.5V147.2M720.1 143.5V149.6M723.2 141.0V148.7M724.8 144.4V149.6M727.9 140.3V145.0M729.4 140.7V147.3M734.1 134.3V146.2M748.1 91.9V101.3M749.6 98.3V108.2M751.2 104.8V108.7M752.7 105.8V115.3M757.4 101.0V109.7M759.0 106.9V115.3M760.5 108.9V115.8M762.1 112.1V119.5M763.6 114.2V122.4M765.2 117.7V128.3M774.5 97.2V109.4M776.0 98.2V105.4M779.1 88.4V98.9M783.8 87.1V94.6M785.4 92.0V100.6M786.9 95.3V103.7M788.5 96.9V107.9M793.1 91.0V96.9M802.4 67.8V78.4M807.1 69.5V77.2M808.6 75.2V83.8M810.2 79.2V85.9M811.8 80.5V88.0M814.9 76.2V90.1M816.4 85.4V94.2M818.0 90.8V111.0M821.1 98.3V109.0M824.2 97.7V106.5M825.7 105.1V110.2M827.3 106.5V113.1M828.8 109.3V115.9M831.9 104.4V117.5M833.5 110.9V119.2M835.0 114.2V121.1M836.6 115.3V121.4M842.8 103.5V118.3M845.9 105.6V115.7M847.5 112.3V123.5M850.6 110.0V121.3M852.1 116.7V123.7M856.8 112.8V121.1M858.3 114.1V120.8M861.4 117.0V121.9M863.0 113.6V129.3M870.8 114.4V119.0M873.9 110.3V119.9M878.5 106.3V112.5M880.1 109.5V117.1M881.6 111.7V117.2M883.2 112.7V119.5M884.7 113.0V126.1M887.9 120.7V127.6M889.4 122.6V133.3M891.0 124.4V132.0M894.1 120.2V132.3M898.7 116.8V126.5M903.4 108.6V119.4M911.1 87.1V96.9M912.7 93.4V103.8M914.3 102.1V110.6M920.5 93.7V105.0M923.6 88.7V98.6M926.7 76.0V88.5M934.4 36.5V46.8M937.5 35.9V44.3M942.2 31.0V40.4M943.8 34.2V50.8M945.3 47.3V57.5M948.4 33.3V40.5" stroke="#d01c28" stroke-width="0.65" fill="none"/>
<path d="M6.68 350.0h1.24V351.5h-1.24zM8.23 349.5h1.24V350.7h-1.24zM11.34 349.3h1.24V350.8h-1.24zM14.45 349.1h1.24V350.9h-1.24zM19.10 348.5h1.24V350.0h-1.24zM26.87 349.0h1.24V351.1h-1.24zM29.98 349.1h1.24V350.7h-1.24zM31.53 348.3h1.24V350.0h-1.24zM36.19 349.4h1.24V351.0h-1.24zM37.74 348.5h1.24V350.3h-1.24zM43.95 349.2h1.24V350.6h-1.24zM45.50 349.1h1.24V350.8h-1.24zM47.06 349.3h1.24V350.6h-1.24zM48.61 348.8h1.24V350.8h-1.24zM51.72 349.1h1.24V350.9h-1.24zM53.27 348.8h1.24V350.3h-1.24zM56.38 349.3h1.24V351.4h-1.24zM57.93 349.4h1.24V350.9h-1.24zM59.48 348.6h1.24V350.7h-1.24zM61.03 348.2h1.24V349.7h-1.24zM65.69 348.6h1.24V350.3h-1.24zM67.25 342.5h1.24V349.5h-1.24zM68.80 338.8h1.24V342.3h-1.24zM75.01 340.0h1.24V341.2h-1.24zM79.67 339.5h1.24V341.0h-1.24zM84.33 339.8h1.24V341.4h-1.24zM87.44 340.2h1.24V341.3h-1.24zM88.99 339.8h1.24V341.3h-1.24zM93.65 339.9h1.24V341.3h-1.24zM99.86 341.2h1.24V342.1h-1.24zM101.41 340.9h1.24V342.2h-1.24zM102.97 340.9h1.24V342.2h-1.24zM104.52 340.9h1.24V341.8h-1.24zM107.62 341.5h1.24V342.6h-1.24zM109.18 341.3h1.24V342.8h-1.24zM116.94 342.5h1.24V343.8h-1.24zM123.15 344.2h1.24V345.0h-1.24zM124.71 343.2h1.24V344.7h-1.24zM130.92 344.3h1.24V345.1h-1.24zM141.79 344.3h1.24V346.2h-1.24zM143.34 343.0h1.24V344.2h-1.24zM144.90 342.1h1.24V343.0h-1.24zM146.45 340.9h1.24V342.3h-1.24zM149.56 341.9h1.24V343.3h-1.24zM151.11 341.8h1.24V343.3h-1.24zM152.66 341.4h1.24V342.7h-1.24zM157.32 341.5h1.24V342.9h-1.24zM161.98 342.0h1.24V343.3h-1.24zM165.09 342.7h1.24V343.8h-1.24zM166.64 342.5h1.24V343.4h-1.24zM174.40 342.6h1.24V343.6h-1.24zM175.96 341.8h1.24V343.0h-1.24zM177.51 341.7h1.24V342.6h-1.24zM179.06 340.6h1.24V342.0h-1.24zM180.62 340.2h1.24V341.0h-1.24zM185.27 340.8h1.24V341.8h-1.24zM186.83 340.5h1.24V341.3h-1.24zM189.93 340.8h1.24V342.2h-1.24zM191.49 340.9h1.24V342.2h-1.24zM194.59 340.0h1.24V341.5h-1.24zM197.70 337.5h1.24V340.9h-1.24zM199.25 336.2h1.24V337.9h-1.24zM200.80 334.7h1.24V337.0h-1.24zM202.36 333.1h1.24V336.1h-1.24zM203.91 330.3h1.24V333.1h-1.24zM205.46 327.6h1.24V330.9h-1.24zM207.02 325.2h1.24V327.3h-1.24zM208.57 320.4h1.24V325.1h-1.24zM210.12 315.3h1.24V319.9h-1.24zM211.68 313.3h1.24V315.5h-1.24zM213.23 312.6h1.24V314.0h-1.24zM216.33 311.9h1.24V313.2h-1.24zM217.89 310.9h1.24V313.4h-1.24zM219.44 310.8h1.24V313.5h-1.24zM222.55 309.3h1.24V311.6h-1.24zM224.10 307.7h1.24V309.5h-1.24zM225.65 304.2h1.24V307.6h-1.24zM227.21 300.5h1.24V304.5h-1.24zM230.31 300.5h1.24V302.5h-1.24zM234.97 296.1h1.24V302.0h-1.24zM236.52 294.6h1.24V296.3h-1.24zM238.08 292.4h1.24V295.5h-1.24zM239.63 290.0h1.24V293.3h-1.24zM241.18 287.4h1.24V290.2h-1.24zM242.74 285.3h1.24V287.8h-1.24zM250.50 286.0h1.24V289.0h-1.24zM252.05 284.6h1.24V286.3h-1.24zM253.61 283.9h1.24V286.1h-1.24zM255.16 283.9h1.24V285.8h-1.24zM256.71 283.7h1.24V285.7h-1.24zM258.27 281.1h1.24V284.5h-1.24zM261.37 283.0h1.24V285.9h-1.24zM262.92 281.4h1.24V284.6h-1.24zM270.69 278.5h1.24V281.5h-1.24zM278.45 277.7h1.24V281.7h-1.24zM281.56 279.1h1.24V282.5h-1.24zM284.67 277.8h1.24V281.0h-1.24zM286.22 275.0h1.24V278.4h-1.24zM287.77 271.5h1.24V275.1h-1.24zM289.33 265.9h1.24V271.7h-1.24zM300.20 280.5h1.24V282.4h-1.24zM303.30 279.8h1.24V283.2h-1.24zM306.41 279.7h1.24V281.4h-1.24zM307.96 279.0h1.24V280.6h-1.24zM314.17 280.8h1.24V282.9h-1.24zM315.73 280.4h1.24V281.7h-1.24zM318.83 279.0h1.24V281.4h-1.24zM320.39 277.2h1.24V279.4h-1.24zM321.94 276.5h1.24V278.0h-1.24zM325.04 276.9h1.24V278.8h-1.24zM328.15 274.9h1.24V277.7h-1.24zM339.02 290.1h1.24V297.1h-1.24zM340.57 284.4h1.24V289.8h-1.24zM342.13 280.8h1.24V284.3h-1.24zM345.23 279.9h1.24V283.1h-1.24zM346.79 277.7h1.24V280.2h-1.24zM348.34 276.6h1.24V279.2h-1.24zM353.00 277.3h1.24V279.0h-1.24zM356.10 278.5h1.24V281.5h-1.24zM359.21 276.2h1.24V280.2h-1.24zM360.76 273.4h1.24V276.5h-1.24zM363.87 271.1h1.24V273.5h-1.24zM365.42 269.5h1.24V271.3h-1.24zM366.98 268.2h1.24V271.1h-1.24zM368.53 265.6h1.24V269.8h-1.24zM370.08 261.0h1.24V265.2h-1.24zM373.19 260.0h1.24V263.1h-1.24zM380.95 266.0h1.24V268.7h-1.24zM382.51 264.9h1.24V266.3h-1.24zM385.61 264.7h1.24V266.4h-1.24zM391.82 264.5h1.24V265.7h-1.24zM394.93 264.2h1.24V266.1h-1.24zM398.04 265.2h1.24V266.3h-1.24zM401.14 267.1h1.24V268.5h-1.24zM404.25 267.7h1.24V269.4h-1.24zM405.80 267.6h1.24V269.1h-1.24zM407.35 267.3h1.24V268.4h-1.24zM408.91 266.9h1.24V268.4h-1.24zM412.01 267.1h1.24V268.9h-1.24zM413.57 266.8h1.24V268.1h-1.24zM416.67 266.7h1.24V268.1h-1.24zM418.22 266.3h1.24V267.5h-1.24zM422.88 266.6h1.24V268.1h-1.24zM427.54 267.8h1.24V269.8h-1.24zM433.75 268.7h1.24V269.9h-1.24zM435.31 268.2h1.24V269.2h-1.24zM439.97 268.7h1.24V270.3h-1.24zM441.52 267.5h1.24V269.3h-1.24zM443.07 267.6h1.24V269.2h-1.24zM444.63 266.9h1.24V268.7h-1.24zM447.73 267.1h1.24V268.2h-1.24zM450.84 266.3h1.24V268.0h-1.24zM458.60 271.0h1.24V272.3h-1.24zM460.16 268.8h1.24V270.8h-1.24zM461.71 268.3h1.24V269.3h-1.24zM464.81 268.7h1.24V269.8h-1.24zM474.13 272.1h1.24V274.0h-1.24zM475.69 269.0h1.24V272.3h-1.24zM477.24 267.3h1.24V268.9h-1.24zM481.90 268.1h1.24V269.4h-1.24zM483.45 267.7h1.24V269.1h-1.24zM486.56 267.2h1.24V269.7h-1.24zM491.22 268.2h1.24V270.0h-1.24zM495.87 269.2h1.24V271.1h-1.24zM500.53 268.1h1.24V269.9h-1.24zM506.75 267.9h1.24V269.5h-1.24zM508.30 267.5h1.24V269.0h-1.24zM509.85 266.7h1.24V268.7h-1.24zM514.51 266.9h1.24V268.9h-1.24zM516.06 266.4h1.24V267.9h-1.24zM520.72 267.8h1.24V268.9h-1.24zM522.28 267.0h1.24V268.4h-1.24zM523.83 265.3h1.24V267.7h-1.24zM526.93 266.2h1.24V267.8h-1.24zM528.49 265.6h1.24V267.6h-1.24zM530.04 262.3h1.24V266.0h-1.24zM534.70 260.3h1.24V264.0h-1.24zM537.81 262.8h1.24V265.9h-1.24zM539.36 261.0h1.24V263.9h-1.24zM542.46 263.4h1.24V266.6h-1.24zM544.02 261.0h1.24V264.4h-1.24zM547.12 258.5h1.24V261.7h-1.24zM548.68 253.8h1.24V258.5h-1.24zM550.23 251.8h1.24V254.3h-1.24zM551.78 250.8h1.24V253.5h-1.24zM554.89 252.3h1.24V256.0h-1.24zM556.44 249.3h1.24V254.1h-1.24zM557.99 246.5h1.24V248.4h-1.24zM564.21 248.7h1.24V251.9h-1.24zM565.76 244.9h1.24V249.6h-1.24zM568.87 239.9h1.24V244.6h-1.24zM575.08 238.3h1.24V241.9h-1.24zM576.63 236.6h1.24V239.1h-1.24zM579.74 234.1h1.24V238.0h-1.24zM581.29 230.6h1.24V233.7h-1.24zM584.40 225.4h1.24V230.9h-1.24zM585.95 223.7h1.24V225.9h-1.24zM587.50 221.4h1.24V224.8h-1.24zM589.05 221.5h1.24V224.1h-1.24zM596.82 227.0h1.24V229.6h-1.24zM604.58 256.0h1.24V265.9h-1.24zM606.14 246.1h1.24V256.4h-1.24zM607.69 244.6h1.24V247.0h-1.24zM610.80 250.0h1.24V252.5h-1.24zM612.35 247.5h1.24V249.8h-1.24zM615.46 239.9h1.24V246.5h-1.24zM617.01 237.6h1.24V240.4h-1.24zM618.56 233.1h1.24V237.7h-1.24zM620.11 225.6h1.24V232.7h-1.24zM624.77 223.9h1.24V226.4h-1.24zM626.33 222.0h1.24V224.6h-1.24zM632.54 224.0h1.24V228.0h-1.24zM635.64 225.8h1.24V229.4h-1.24zM637.20 221.5h1.24V226.8h-1.24zM638.75 219.5h1.24V223.2h-1.24zM640.30 219.2h1.24V221.0h-1.24zM641.86 217.0h1.24V219.9h-1.24zM643.41 212.6h1.24V216.7h-1.24zM644.96 203.4h1.24V212.6h-1.24zM646.52 199.2h1.24V203.6h-1.24zM648.07 195.3h1.24V200.5h-1.24zM649.62 187.7h1.24V195.4h-1.24zM651.17 185.5h1.24V188.6h-1.24zM652.73 180.0h1.24V184.9h-1.24zM654.28 175.2h1.24V181.3h-1.24zM655.83 166.9h1.24V174.8h-1.24zM665.15 175.5h1.24V181.3h-1.24zM668.26 177.0h1.24V180.2h-1.24zM669.81 175.0h1.24V179.6h-1.24zM671.36 174.0h1.24V176.6h-1.24zM674.47 176.0h1.24V179.1h-1.24zM677.58 178.3h1.24V181.8h-1.24zM679.13 178.2h1.24V182.6h-1.24zM683.79 180.0h1.24V184.7h-1.24zM685.34 175.6h1.24V179.7h-1.24zM686.89 169.4h1.24V175.7h-1.24zM688.45 165.2h1.24V170.1h-1.24zM690.00 160.6h1.24V165.4h-1.24zM694.66 160.5h1.24V165.0h-1.24zM697.76 149.4h1.24V160.2h-1.24zM699.32 141.6h1.24V150.3h-1.24zM700.87 133.2h1.24V139.8h-1.24zM702.42 117.9h1.24V133.4h-1.24zM713.29 139.5h1.24V144.7h-1.24zM716.40 139.9h1.24V144.5h-1.24zM721.06 142.0h1.24V147.1h-1.24zM725.72 142.9h1.24V148.8h-1.24zM730.38 141.0h1.24V145.2h-1.24zM731.93 137.9h1.24V143.8h-1.24zM735.04 136.3h1.24V141.4h-1.24zM736.59 136.9h1.24V139.2h-1.24zM738.14 131.6h1.24V137.4h-1.24zM739.70 125.9h1.24V130.5h-1.24zM741.25 120.1h1.24V126.5h-1.24zM742.80 109.3h1.24V118.9h-1.24zM744.35 103.8h1.24V109.1h-1.24zM745.91 95.9h1.24V104.1h-1.24zM753.67 104.2h1.24V110.5h-1.24zM755.23 100.8h1.24V106.6h-1.24zM766.10 123.5h1.24V127.1h-1.24zM767.65 121.0h1.24V125.2h-1.24zM769.20 116.3h1.24V121.4h-1.24zM770.76 113.0h1.24V117.3h-1.24zM772.31 103.2h1.24V111.4h-1.24zM776.97 93.8h1.24V99.7h-1.24zM780.07 91.6h1.24V95.7h-1.24zM781.63 86.8h1.24V92.6h-1.24zM789.39 98.4h1.24V104.6h-1.24zM790.94 93.1h1.24V99.8h-1.24zM794.05 91.2h1.24V94.7h-1.24zM795.60 90.6h1.24V94.2h-1.24zM797.16 88.8h1.24V94.9h-1.24zM798.71 84.9h1.24V90.6h-1.24zM800.26 75.7h1.24V86.8h-1.24zM803.37 71.7h1.24V75.8h-1.24zM804.92 68.7h1.24V73.1h-1.24zM812.69 79.0h1.24V85.3h-1.24zM818.90 103.0h1.24V108.6h-1.24zM822.00 100.8h1.24V107.9h-1.24zM829.77 111.1h1.24V114.1h-1.24zM837.53 118.6h1.24V123.4h-1.24zM839.09 116.5h1.24V121.0h-1.24zM840.64 106.4h1.24V116.6h-1.24zM843.75 110.3h1.24V115.7h-1.24zM848.41 115.3h1.24V121.1h-1.24zM853.06 117.3h1.24V122.6h-1.24zM854.62 113.0h1.24V118.3h-1.24zM859.28 116.9h1.24V121.9h-1.24zM863.94 126.5h1.24V130.4h-1.24zM865.49 123.1h1.24V128.9h-1.24zM867.04 119.8h1.24V125.7h-1.24zM868.59 115.4h1.24V123.3h-1.24zM871.70 113.3h1.24V117.8h-1.24zM874.81 109.0h1.24V114.9h-1.24zM876.36 106.8h1.24V110.5h-1.24zM885.68 123.1h1.24V125.4h-1.24zM891.89 124.7h1.24V129.1h-1.24zM895.00 122.7h1.24V130.7h-1.24zM896.55 120.0h1.24V124.4h-1.24zM899.65 117.7h1.24V123.5h-1.24zM901.21 110.0h1.24V121.2h-1.24zM904.31 114.3h1.24V118.7h-1.24zM905.87 106.3h1.24V113.3h-1.24zM907.42 100.1h1.24V106.6h-1.24zM908.97 86.7h1.24V99.8h-1.24zM915.18 102.2h1.24V108.9h-1.24zM916.74 95.9h1.24V101.8h-1.24zM918.29 93.6h1.24V97.9h-1.24zM921.40 93.5h1.24V100.5h-1.24zM924.50 79.1h1.24V92.0h-1.24zM927.61 74.6h1.24V86.9h-1.24zM929.16 58.5h1.24V75.0h-1.24zM930.71 45.9h1.24V57.4h-1.24zM932.27 40.2h1.24V46.5h-1.24zM935.37 38.6h1.24V44.6h-1.24zM938.48 36.6h1.24V42.7h-1.24zM940.03 35.0h1.24V39.8h-1.24zM946.24 35.2h1.24V56.0h-1.24z" fill="#eeeeee" stroke="#3c3c3c" stroke-width="0.6"/>
<path d="M9.63 349.4h1.56V350.5h-1.56zM12.73 349.1h1.56V350.5h-1.56zM15.84 349.2h1.56V350.4h-1.56zM17.39 349.2h1.56V350.2h-1.56zM20.50 348.0h1.56V350.0h-1.56zM22.05 349.0h1.56V350.3h-1.56zM23.60 348.9h1.56V350.9h-1.56zM25.16 349.1h1.56V350.6h-1.56zM28.26 349.2h1.56V350.3h-1.56zM32.92 348.0h1.56V350.4h-1.56zM34.47 349.6h1.56V350.8h-1.56zM39.13 348.1h1.56V349.6h-1.56zM40.69 348.1h1.56V349.9h-1.56zM42.24 348.6h1.56V350.5h-1.56zM50.00 348.4h1.56V350.5h-1.56zM54.66 349.3h1.56V350.8h-1.56zM62.43 348.3h1.56V349.3h-1.56zM63.98 348.1h1.56V350.1h-1.56zM70.19 337.4h1.56V339.7h-1.56zM71.75 338.5h1.56V340.1h-1.56zM73.30 339.5h1.56V341.5h-1.56zM76.40 339.9h1.56V340.7h-1.56zM77.96 340.3h1.56V341.3h-1.56zM81.06 339.9h1.56V340.7h-1.56zM82.62 340.5h1.56V341.4h-1.56zM85.72 339.4h1.56V340.9h-1.56zM90.38 339.9h1.56V341.5h-1.56zM91.93 340.2h1.56V341.7h-1.56zM95.04 340.2h1.56V341.3h-1.56zM96.59 340.5h1.56V342.0h-1.56zM98.15 340.6h1.56V342.1h-1.56zM105.91 341.1h1.56V342.3h-1.56zM110.57 341.2h1.56V342.7h-1.56zM112.12 341.7h1.56V342.7h-1.56zM113.68 341.9h1.56V343.3h-1.56zM115.23 342.8h1.56V343.8h-1.56zM118.34 342.4h1.56V343.2h-1.56zM119.89 342.9h1.56V344.1h-1.56zM121.44 343.6h1.56V344.6h-1.56zM126.10 343.1h1.56V344.0h-1.56zM127.65 343.6h1.56V344.9h-1.56zM129.21 344.2h1.56V345.1h-1.56zM132.31 344.5h1.56V345.7h-1.56zM133.87 345.2h1.56V346.2h-1.56zM135.42 345.1h1.56V346.2h-1.56zM136.97 345.2h1.56V346.3h-1.56zM138.52 345.4h1.56V346.5h-1.56zM140.08 345.5h1.56V346.6h-1.56zM147.84 341.4h1.56V342.9h-1.56zM154.05 341.2h1.56V342.2h-1.56zM155.61 342.0h1.56V342.9h-1.56zM158.71 341.4h1.56V342.7h-1.56zM160.27 341.9h1.56V343.3h-1.56zM163.37 342.0h1.56V343.4h-1.56zM168.03 342.0h1.56V343.2h-1.56zM169.58 342.6h1.56V343.5h-1.56zM171.14 342.3h1.56V343.7h-1.56zM172.69 342.7h1.56V343.7h-1.56zM182.01 340.2h1.56V341.3h-1.56zM183.56 341.0h1.56V342.0h-1.56zM188.22 340.5h1.56V341.8h-1.56zM192.88 340.6h1.56V342.1h-1.56zM195.99 340.0h1.56V341.1h-1.56zM214.62 312.5h1.56V313.7h-1.56zM220.83 311.0h1.56V312.4h-1.56zM228.60 299.9h1.56V302.7h-1.56zM231.70 300.6h1.56V302.2h-1.56zM233.26 301.0h1.56V302.5h-1.56zM244.13 285.2h1.56V286.7h-1.56zM245.68 285.5h1.56V287.2h-1.56zM247.23 284.5h1.56V286.4h-1.56zM248.79 285.4h1.56V288.8h-1.56zM259.66 281.9h1.56V283.4h-1.56zM264.32 280.6h1.56V282.7h-1.56zM265.87 281.2h1.56V282.9h-1.56zM267.42 280.7h1.56V283.5h-1.56zM268.98 281.2h1.56V283.1h-1.56zM272.08 278.2h1.56V280.2h-1.56zM273.64 279.1h1.56V281.3h-1.56zM275.19 279.8h1.56V282.0h-1.56zM276.74 280.3h1.56V283.0h-1.56zM279.85 277.8h1.56V282.3h-1.56zM282.95 279.2h1.56V281.7h-1.56zM290.72 264.7h1.56V267.6h-1.56zM292.27 267.1h1.56V271.8h-1.56zM293.82 271.5h1.56V277.8h-1.56zM295.38 278.0h1.56V279.8h-1.56zM296.93 279.6h1.56V281.8h-1.56zM298.48 281.5h1.56V283.1h-1.56zM301.59 281.5h1.56V283.3h-1.56zM304.70 279.5h1.56V281.6h-1.56zM309.35 279.5h1.56V281.7h-1.56zM310.91 280.3h1.56V282.3h-1.56zM312.46 281.1h1.56V282.3h-1.56zM317.12 279.7h1.56V281.9h-1.56zM323.33 277.0h1.56V278.5h-1.56zM326.44 276.4h1.56V278.7h-1.56zM329.54 274.4h1.56V276.4h-1.56zM331.10 274.4h1.56V276.8h-1.56zM332.65 276.2h1.56V277.9h-1.56zM334.20 277.7h1.56V281.0h-1.56zM335.76 280.7h1.56V286.4h-1.56zM337.31 286.5h1.56V297.4h-1.56zM343.52 280.6h1.56V283.2h-1.56zM349.73 276.1h1.56V278.7h-1.56zM351.29 276.6h1.56V279.5h-1.56zM354.39 277.4h1.56V280.4h-1.56zM357.50 279.0h1.56V281.3h-1.56zM362.16 272.6h1.56V274.8h-1.56zM371.47 259.6h1.56V263.0h-1.56zM374.58 262.4h1.56V267.4h-1.56zM376.13 265.9h1.56V269.1h-1.56zM377.69 267.0h1.56V268.4h-1.56zM379.24 267.4h1.56V268.8h-1.56zM383.90 265.0h1.56V266.3h-1.56zM387.00 264.0h1.56V265.8h-1.56zM388.56 264.7h1.56V266.1h-1.56zM390.11 264.5h1.56V266.3h-1.56zM393.22 264.8h1.56V266.0h-1.56zM396.32 264.5h1.56V266.2h-1.56zM399.43 265.8h1.56V268.3h-1.56zM402.53 267.3h1.56V268.8h-1.56zM410.30 267.8h1.56V268.8h-1.56zM414.96 267.1h1.56V268.5h-1.56zM419.62 266.3h1.56V267.4h-1.56zM421.17 266.7h1.56V268.2h-1.56zM424.28 266.6h1.56V267.8h-1.56zM425.83 267.1h1.56V269.0h-1.56zM428.94 268.2h1.56V269.4h-1.56zM430.49 268.3h1.56V270.0h-1.56zM432.04 268.4h1.56V270.3h-1.56zM436.70 268.2h1.56V269.4h-1.56zM438.25 269.1h1.56V270.1h-1.56zM446.02 267.3h1.56V268.3h-1.56zM449.12 267.1h1.56V268.3h-1.56zM452.23 266.4h1.56V268.4h-1.56zM453.78 268.0h1.56V269.6h-1.56zM455.34 268.7h1.56V269.8h-1.56zM456.89 270.0h1.56V272.4h-1.56zM463.10 268.3h1.56V269.7h-1.56zM466.21 268.9h1.56V270.4h-1.56zM467.76 269.9h1.56V271.0h-1.56zM469.31 269.8h1.56V271.6h-1.56zM470.87 270.5h1.56V271.9h-1.56zM472.42 271.0h1.56V273.8h-1.56zM478.63 267.3h1.56V269.2h-1.56zM480.18 268.5h1.56V270.3h-1.56zM484.84 268.1h1.56V269.6h-1.56zM487.95 267.6h1.56V268.6h-1.56zM489.50 268.6h1.56V270.1h-1.56zM492.61 268.2h1.56V269.5h-1.56zM494.16 269.4h1.56V270.7h-1.56zM497.27 269.0h1.56V270.7h-1.56zM498.82 268.8h1.56V270.7h-1.56zM501.93 267.4h1.56V269.4h-1.56zM503.48 267.6h1.56V269.4h-1.56zM505.03 267.6h1.56V269.6h-1.56zM511.24 266.4h1.56V268.3h-1.56zM512.80 267.1h1.56V268.7h-1.56zM517.46 266.0h1.56V267.6h-1.56zM519.01 267.0h1.56V268.9h-1.56zM525.22 265.1h1.56V267.2h-1.56zM531.43 261.1h1.56V263.8h-1.56zM532.99 262.2h1.56V264.0h-1.56zM536.09 259.7h1.56V264.3h-1.56zM540.75 261.3h1.56V264.6h-1.56zM545.41 259.3h1.56V262.9h-1.56zM553.18 251.6h1.56V255.3h-1.56zM559.39 245.9h1.56V248.6h-1.56zM560.94 246.2h1.56V249.3h-1.56zM562.49 249.2h1.56V251.7h-1.56zM567.15 242.3h1.56V246.3h-1.56zM570.26 239.3h1.56V241.7h-1.56zM571.81 240.1h1.56V242.0h-1.56zM573.36 240.6h1.56V243.3h-1.56zM578.02 236.3h1.56V239.0h-1.56zM582.68 229.2h1.56V232.2h-1.56zM590.45 221.9h1.56V224.3h-1.56zM592.00 223.9h1.56V226.8h-1.56zM593.55 225.3h1.56V229.3h-1.56zM595.11 227.0h1.56V228.8h-1.56zM598.21 226.9h1.56V229.9h-1.56zM599.77 229.2h1.56V236.5h-1.56zM601.32 236.2h1.56V259.4h-1.56zM602.87 259.1h1.56V265.5h-1.56zM609.08 245.1h1.56V252.7h-1.56zM613.74 244.6h1.56V248.1h-1.56zM621.51 223.0h1.56V227.0h-1.56zM623.06 224.4h1.56V227.1h-1.56zM627.72 221.1h1.56V224.3h-1.56zM629.27 223.0h1.56V225.5h-1.56zM630.83 223.6h1.56V227.2h-1.56zM633.93 226.7h1.56V230.2h-1.56zM657.23 165.7h1.56V170.0h-1.56zM658.78 167.9h1.56V173.0h-1.56zM660.33 169.8h1.56V174.5h-1.56zM661.89 172.0h1.56V176.1h-1.56zM663.44 176.1h1.56V180.8h-1.56zM666.54 175.1h1.56V178.7h-1.56zM672.76 172.8h1.56V177.5h-1.56zM675.86 177.3h1.56V180.7h-1.56zM680.52 179.3h1.56V184.4h-1.56zM682.07 182.9h1.56V185.4h-1.56zM691.39 159.1h1.56V164.0h-1.56zM692.95 162.2h1.56V166.1h-1.56zM696.05 158.0h1.56V162.5h-1.56zM703.82 116.0h1.56V121.4h-1.56zM705.37 119.0h1.56V124.4h-1.56zM706.92 122.5h1.56V127.9h-1.56zM708.48 126.7h1.56V138.4h-1.56zM710.03 137.5h1.56V140.1h-1.56zM711.58 138.7h1.56V144.2h-1.56zM714.69 139.8h1.56V144.2h-1.56zM717.79 141.0h1.56V146.8h-1.56zM719.35 145.9h1.56V148.3h-1.56zM722.45 141.7h1.56V146.4h-1.56zM724.01 145.6h1.56V148.2h-1.56zM727.11 141.4h1.56V144.4h-1.56zM728.66 141.3h1.56V145.0h-1.56zM733.32 137.2h1.56V140.9h-1.56zM747.30 95.9h1.56V101.1h-1.56zM748.85 100.2h1.56V105.2h-1.56zM750.41 105.2h1.56V108.1h-1.56zM751.96 106.9h1.56V111.5h-1.56zM756.62 103.5h1.56V109.4h-1.56zM758.17 108.6h1.56V111.7h-1.56zM759.72 110.8h1.56V114.3h-1.56zM761.28 113.0h1.56V118.8h-1.56zM762.83 115.8h1.56V121.7h-1.56zM764.38 119.5h1.56V126.1h-1.56zM773.70 100.5h1.56V106.0h-1.56zM775.25 100.2h1.56V103.8h-1.56zM778.36 91.7h1.56V96.9h-1.56zM783.02 87.4h1.56V94.3h-1.56zM784.57 94.2h1.56V98.5h-1.56zM786.13 97.4h1.56V102.7h-1.56zM787.68 100.9h1.56V105.6h-1.56zM792.34 91.8h1.56V96.1h-1.56zM801.66 73.5h1.56V77.0h-1.56zM806.31 70.1h1.56V75.5h-1.56zM807.87 75.4h1.56V80.6h-1.56zM809.42 79.9h1.56V84.9h-1.56zM810.97 81.1h1.56V86.8h-1.56zM814.08 79.8h1.56V89.1h-1.56zM815.63 86.9h1.56V91.9h-1.56zM817.19 92.0h1.56V106.7h-1.56zM820.29 104.5h1.56V108.0h-1.56zM823.40 99.7h1.56V106.3h-1.56zM824.95 106.3h1.56V109.5h-1.56zM826.50 108.1h1.56V112.5h-1.56zM828.06 110.5h1.56V115.4h-1.56zM831.16 111.6h1.56V115.9h-1.56zM832.72 113.1h1.56V118.6h-1.56zM834.27 116.8h1.56V119.4h-1.56zM835.82 117.8h1.56V120.3h-1.56zM842.03 106.4h1.56V114.0h-1.56zM845.14 111.0h1.56V115.1h-1.56zM846.69 115.6h1.56V120.3h-1.56zM849.80 113.5h1.56V119.2h-1.56zM851.35 116.9h1.56V123.1h-1.56zM856.01 113.9h1.56V117.5h-1.56zM857.56 114.9h1.56V120.6h-1.56zM860.67 117.5h1.56V121.5h-1.56zM862.22 118.2h1.56V127.9h-1.56zM869.99 115.2h1.56V118.6h-1.56zM873.09 112.2h1.56V117.3h-1.56zM877.75 108.1h1.56V112.1h-1.56zM879.31 111.4h1.56V116.1h-1.56zM880.86 113.4h1.56V116.7h-1.56zM882.41 113.5h1.56V118.9h-1.56zM883.96 116.3h1.56V123.3h-1.56zM887.07 121.0h1.56V127.1h-1.56zM888.62 125.5h1.56V130.6h-1.56zM890.18 126.3h1.56V130.9h-1.56zM893.28 125.5h1.56V131.6h-1.56zM897.94 119.1h1.56V122.3h-1.56zM902.60 110.3h1.56V116.5h-1.56zM910.37 87.5h1.56V96.5h-1.56zM911.92 96.8h1.56V101.9h-1.56zM913.47 103.0h1.56V108.8h-1.56zM919.68 96.6h1.56V101.0h-1.56zM922.79 89.4h1.56V96.0h-1.56zM925.90 79.8h1.56V85.7h-1.56zM933.66 40.1h1.56V46.5h-1.56zM936.77 36.8h1.56V43.2h-1.56zM941.43 32.3h1.56V39.1h-1.56zM942.98 37.4h1.56V48.3h-1.56zM944.53 48.2h1.56V55.3h-1.56zM947.64 33.7h1.56V38.0h-1.56z" fill="#e01522"/>
<path d="M206.5 359.7L210.7 357.5L214.89999999999998 359.7V365.3H206.5z" fill="#e6ece6" stroke="#4f9f55" stroke-width="1.15" stroke-linejoin="round"/>
<text x="210.7" y="364.2" font-size="4.4" font-weight="bold" fill="#666" text-anchor="middle">E</text>
<path d="M582.0999999999999 359.7L586.3 357.5L590.5 359.7V365.3H582.0999999999999z" fill="#e6ece6" stroke="#4f9f55" stroke-width="1.15" stroke-linejoin="round"/>
<text x="586.3" y="364.2" font-size="4.4" font-weight="bold" fill="#666" text-anchor="middle">E</text>
<circle cx="290.6" cy="362" r="4.8" fill="#e8e6e2" stroke="#8f6238" stroke-width="1.15"/>
<text x="290.6" y="363.7" font-size="4.6" font-weight="bold" fill="#666" text-anchor="middle">D</text>
<circle cx="684.2" cy="362" r="4.8" fill="#e8e6e2" stroke="#8f6238" stroke-width="1.15"/>
<text x="684.2" y="363.7" font-size="4.6" font-weight="bold" fill="#666" text-anchor="middle">D</text>
<circle cx="703" cy="362" r="4.8" fill="#e8e6e2" stroke="#c23040" stroke-width="1.15"/>
<text x="703" y="363.7" font-size="4.6" font-weight="bold" fill="#666" text-anchor="middle">S</text>
<text x="40.5" y="380" font-size="8" fill="#3c3c3c" text-anchor="middle">Νοε'23</text>
<text x="105.5" y="380" font-size="8" fill="#3c3c3c" text-anchor="middle">2024</text>
<text x="174.5" y="380" font-size="8" fill="#3c3c3c" text-anchor="middle">Μαρ'24</text>
<text x="237.2" y="380" font-size="8" fill="#3c3c3c" text-anchor="middle">Μαι'24</text>
<text x="297.5" y="380" font-size="8" fill="#3c3c3c" text-anchor="middle">Ιουλ'24</text>
<text x="368.5" y="380" font-size="8" fill="#3c3c3c" text-anchor="middle">Σεπ'24</text>
<text x="436.5" y="380" font-size="8" fill="#3c3c3c" text-anchor="middle">Νοε'24</text>
<text x="500.5" y="380" font-size="8" fill="#3c3c3c" text-anchor="middle">2025</text>
<text x="566.5" y="380" font-size="8" fill="#3c3c3c" text-anchor="middle">Μαρ'25</text>
<text x="628.5" y="380" font-size="8" fill="#3c3c3c" text-anchor="middle">Μαι'25</text>
<text x="693.7" y="380" font-size="8" fill="#3c3c3c" text-anchor="middle">Ιουλ'25</text>
<text x="762.5" y="380" font-size="8" fill="#3c3c3c" text-anchor="middle">Σεπ'25</text>
<text x="832.5" y="380" font-size="8" fill="#3c3c3c" text-anchor="middle">Νοε'25</text>
<text x="896.6" y="380" font-size="8" fill="#3c3c3c" text-anchor="middle">2026</text>
<text x="960.5" y="380" font-size="8" fill="#3c3c3c" text-anchor="middle">Μαρ</text>
<rect x="979" y="371.2" width="29.7" height="11" rx="2" fill="#e2e7ea"/>
<text x="994.3" y="380" font-size="8" fill="#3c3c3c" text-anchor="middle">25 Μαρ</text>
<text x="1019.3" y="278.1" font-size="8" fill="#3c3c3c" text-anchor="end">4</text>
<text x="1019.3" y="235.5" font-size="8" fill="#3c3c3c" text-anchor="end">5</text>
<text x="1019.3" y="192.9" font-size="8" fill="#3c3c3c" text-anchor="end">6</text>
<text x="1019.3" y="150.4" font-size="8" fill="#3c3c3c" text-anchor="end">7</text>
<text x="1019.3" y="107.8" font-size="8" fill="#3c3c3c" text-anchor="end">8</text>
<text x="1019.3" y="319.5" font-size="8" fill="#3c3c3c" text-anchor="end">3</text>
<text x="979" y="180.1" font-size="8" fill="#8585ab" textLength="30.3" lengthAdjust="spacingAndGlyphs">224,27%</text>
<clipPath id="cright"><rect x="0" y="0" width="1020" height="652"/></clipPath>
<text x="1019.3" y="65.2" font-size="8" fill="#3c3c3c" text-anchor="end">9</text>
<rect x="996.3" y="32.2" width="23.7" height="9.6" fill="#e3e8ea"/>
<rect x="1001" y="31.8" width="19" height="10.8" rx="2" fill="#b9dcc6"/>
<text x="997.1" y="40" font-size="8" fill="#222" textLength="22.2" lengthAdjust="spacingAndGlyphs">9,7014</text>
<path d="M994.2 52.9H1017.8Q1020.0 52.9 1020.0 55.1V61.699999999999996Q1020.0 63.9 1017.8 63.9H994.2Q992.6 63.9 991.0 58.4Q992.6 52.9 994.2 52.9z" fill="#3b69b0"/>
<text x="995.3" y="61.2" font-size="8" fill="#fff" textLength="26.2" lengthAdjust="spacingAndGlyphs" clip-path="url(#cright)" stroke="#fff" stroke-width="0.15">9,2004</text>
<path d="M997.2 78.0H1017.8Q1020.0 78.0 1020.0 80.2V86.2Q1020.0 88.4 1017.8 88.4H997.2Q994 88.4 994 85.2V81.2Q994 78.0 997.2 78.0z" fill="#4cbd69"/>
<text x="998.2" y="86.0" font-size="8" fill="#fff" textLength="24.6" lengthAdjust="spacingAndGlyphs" clip-path="url(#cright)" stroke="#fff" stroke-width="0.15">8,6175</text>
<path d="M995.0 89.4H1017.8Q1020.0 89.4 1020.0 91.60000000000001V97.39999999999999Q1020.0 99.6 1017.8 99.6H995.0Q993.4 99.6 991.8 94.5Q993.4 89.4 995.0 89.4z" fill="#a23fa8"/>
<text x="995.2" y="97.3" font-size="8" fill="#fff" textLength="26.2" lengthAdjust="spacingAndGlyphs" clip-path="url(#cright)" stroke="#fff" stroke-width="0.15">8,3533</text>
<path d="M1000.0 123.00000000000001H1017.8Q1020.0 123.00000000000001 1020.0 125.20000000000002V131.40000000000003Q1020.0 133.60000000000002 1017.8 133.60000000000002H1000.0Q996.8 133.60000000000002 996.8 130.40000000000003V126.20000000000002Q996.8 123.00000000000001 1000.0 123.00000000000001z" fill="#a9a9a9"/>
<text x="1000.8" y="131.2" font-size="8" fill="#f4f4f4" textLength="21.4" lengthAdjust="spacingAndGlyphs" clip-path="url(#cright)" stroke="#f4f4f4" stroke-width="0.15">7,562</text>
<rect x="996" y="319" width="24" height="8.4" fill="#e2e7ea"/>
<text x="997.5" y="326" font-size="8" fill="#222" textLength="22.3" lengthAdjust="spacingAndGlyphs">2,9913</text>
<rect x="797.2" y="198.2" width="124.7" height="154.8" rx="4.5" fill="#c9cdd2" fill-opacity="0.78"/>
<text x="859.8" y="207.8" font-size="8" fill="#444" text-anchor="middle">19 Φεβ</text>
<text x="801.2" y="218.4" font-size="8" fill="#27651c" stroke="#27651c" stroke-width="0.2">OPTIMA</text>
<text x="916" y="218.4" font-size="8" fill="#27651c" stroke="#27651c" stroke-width="0.2" text-anchor="end">9,70</text>
<text x="805.3" y="229.2" font-size="8" fill="#e23a44" stroke="#e23a44" stroke-width="0.2" textLength="44.2" lengthAdjust="spacingAndGlyphs">-0,05 -0,51%</text>
<text x="801.2" y="240.0" font-size="8" fill="#1f3f86" stroke="#1f3f86" stroke-width="0.2">Me(20)</text>
<text x="916" y="240.0" font-size="8" fill="#1f3f86" stroke="#1f3f86" stroke-width="0.2" text-anchor="end">9,2004</text>
<text x="801.2" y="250.7" font-size="8" fill="#2b2b9a" stroke="#2b2b9a" stroke-width="0.2">Αντίσταση 2</text>
<text x="916" y="250.7" font-size="8" fill="#2b2b9a" stroke="#2b2b9a" stroke-width="0.2" text-anchor="end">9,107</text>
<text x="801.2" y="261.5" font-size="8" fill="#2b2b9a" stroke="#2b2b9a" stroke-width="0.2">Αντίσταση 1</text>
<text x="916" y="261.5" font-size="8" fill="#2b2b9a" stroke="#2b2b9a" stroke-width="0.2" text-anchor="end">8,819</text>
<text x="801.2" y="272.3" font-size="8" fill="#2b9440" stroke="#2b9440" stroke-width="0.2">Me(55)</text>
<text x="916" y="272.3" font-size="8" fill="#2b9440" stroke="#2b9440" stroke-width="0.2" text-anchor="end">8,6175</text>
<text x="801.2" y="283.1" font-size="8" fill="#7d2a82" stroke="#7d2a82" stroke-width="0.2">Pivot</text>
<text x="916" y="283.1" font-size="8" fill="#7d2a82" stroke="#7d2a82" stroke-width="0.2" text-anchor="end">8,3533</text>
<text x="801.2" y="293.9" font-size="8" fill="#b8222c" stroke="#b8222c" stroke-width="0.2">Στήριξη 1</text>
<text x="916" y="293.9" font-size="8" fill="#b8222c" stroke="#b8222c" stroke-width="0.2" text-anchor="end">7,887</text>
<text x="801.2" y="304.6" font-size="8" fill="#b8222c" stroke="#b8222c" stroke-width="0.2">Στήριξη 2</text>
<text x="916" y="304.6" font-size="8" fill="#b8222c" stroke="#b8222c" stroke-width="0.2" text-anchor="end">7,599</text>
<text x="801.2" y="315.4" font-size="8" fill="#8a8a8a" stroke="#8a8a8a" stroke-width="0.2">Me(200)</text>
<text x="916" y="315.4" font-size="8" fill="#8a8a8a" stroke="#8a8a8a" stroke-width="0.2" text-anchor="end">7,562</text>
<text x="801.2" y="326.2" font-size="8" fill="#27651c" stroke="#27651c" stroke-width="0.2">Άνοιγμα</text>
<text x="916" y="326.2" font-size="8" fill="#27651c" stroke="#27651c" stroke-width="0.2" text-anchor="end">9,76</text>
<text x="801.2" y="337.0" font-size="8" fill="#27651c" stroke="#27651c" stroke-width="0.2">Μέγιστο</text>
<text x="916" y="337.0" font-size="8" fill="#27651c" stroke="#27651c" stroke-width="0.2" text-anchor="end">9,79</text>
<text x="801.2" y="347.8" font-size="8" fill="#27651c" stroke="#27651c" stroke-width="0.2">Ελάχιστο</text>
<text x="916" y="347.8" font-size="8" fill="#27651c" stroke="#27651c" stroke-width="0.2" text-anchor="end">9,62</text>
<path d="M7.26 519.4v-109.0h1.48v109.0zM8.11 519.4v-6.1h1.48v6.1zM9.67 519.4v-3.0h1.48v3.0zM10.76 519.4v-14.0h1.48v14.0zM16.76 519.4v-10.0h1.48v10.0zM23.64 519.4v-5.8h1.48v5.8zM26.75 519.4v-0.9h1.48v0.9zM28.30 519.4v-2.2h1.48v2.2zM29.86 519.4v-2.6h1.48v2.6zM31.41 519.4v-2.5h1.48v2.5zM37.62 519.4v-1.7h1.48v1.7zM43.83 519.4v-5.5h1.48v5.5zM45.38 519.4v-0.9h1.48v0.9zM48.49 519.4v-5.7h1.48v5.7zM53.15 519.4v-1.0h1.48v1.0zM54.70 519.4v-5.6h1.48v5.6zM56.26 519.4v-1.1h1.48v1.1zM59.36 519.4v-4.3h1.48v4.3zM60.91 519.4v-2.9h1.48v2.9zM67.76 519.4v-11.0h1.48v11.0zM70.23 519.4v-1.6h1.48v1.6zM72.76 519.4v-10.0h1.48v10.0zM79.55 519.4v-1.6h1.48v1.6zM84.21 519.4v-1.9h1.48v1.9zM87.32 519.4v-2.9h1.48v2.9zM88.87 519.4v-1.2h1.48v1.2zM90.42 519.4v-5.1h1.48v5.1zM91.97 519.4v-1.4h1.48v1.4zM95.08 519.4v-1.3h1.48v1.3zM96.63 519.4v-5.0h1.48v5.0zM99.74 519.4v-0.7h1.48v0.7zM101.29 519.4v-1.1h1.48v1.1zM102.85 519.4v-1.1h1.48v1.1zM104.40 519.4v-2.4h1.48v2.4zM107.50 519.4v-0.8h1.48v0.8zM109.06 519.4v-2.2h1.48v2.2zM110.61 519.4v-2.4h1.48v2.4zM116.82 519.4v-0.9h1.48v0.9zM119.93 519.4v-1.4h1.48v1.4zM123.03 519.4v-2.8h1.48v2.8zM124.59 519.4v-0.9h1.48v0.9zM127.69 519.4v-2.9h1.48v2.9zM129.25 519.4v-0.7h1.48v0.7zM132.35 519.4v-1.3h1.48v1.3zM138.56 519.4v-3.3h1.48v3.3zM140.12 519.4v-1.4h1.48v1.4zM144.78 519.4v-3.7h1.48v3.7zM146.33 519.4v-2.5h1.48v2.5zM149.26 519.4v-8.0h1.48v8.0zM152.54 519.4v-3.0h1.48v3.0zM155.65 519.4v-1.7h1.48v1.7zM161.86 519.4v-2.8h1.48v2.8zM163.41 519.4v-2.4h1.48v2.4zM164.97 519.4v-1.1h1.48v1.1zM166.52 519.4v-1.3h1.48v1.3zM174.28 519.4v-1.2h1.48v1.2zM177.39 519.4v-4.8h1.48v4.8zM178.26 519.4v-11.0h1.48v11.0zM180.50 519.4v-1.1h1.48v1.1zM182.05 519.4v-4.9h1.48v4.9zM183.60 519.4v-4.1h1.48v4.1zM185.15 519.4v-1.7h1.48v1.7zM186.71 519.4v-2.6h1.48v2.6zM194.47 519.4v-1.2h1.48v1.2zM197.58 519.4v-4.9h1.48v4.9zM200.68 519.4v-1.2h1.48v1.2zM202.24 519.4v-3.2h1.48v3.2zM203.79 519.4v-6.4h1.48v6.4zM205.34 519.4v-1.6h1.48v1.6zM206.90 519.4v-4.7h1.48v4.7zM208.45 519.4v-4.8h1.48v4.8zM211.56 519.4v-5.5h1.48v5.5zM213.11 519.4v-3.7h1.48v3.7zM214.66 519.4v-1.4h1.48v1.4zM216.21 519.4v-6.1h1.48v6.1zM219.32 519.4v-6.1h1.48v6.1zM220.87 519.4v-5.3h1.48v5.3zM223.98 519.4v-8.8h1.48v8.8zM225.53 519.4v-9.3h1.48v9.3zM227.26 519.4v-15.0h1.48v15.0zM230.19 519.4v-3.6h1.48v3.6zM231.74 519.4v-9.1h1.48v9.1zM234.85 519.4v-6.5h1.48v6.5zM237.96 519.4v-6.7h1.48v6.7zM244.17 519.4v-3.4h1.48v3.4zM245.26 519.4v-17.0h1.48v17.0zM247.27 519.4v-2.0h1.48v2.0zM248.83 519.4v-5.6h1.48v5.6zM250.38 519.4v-4.9h1.48v4.9zM251.93 519.4v-8.9h1.48v8.9zM256.59 519.4v-2.2h1.48v2.2zM258.15 519.4v-5.3h1.48v5.3zM262.80 519.4v-10.9h1.48v10.9zM264.06 519.4v-88.5h1.48v88.5zM267.46 519.4v-6.6h1.48v6.6zM270.57 519.4v-3.4h1.48v3.4zM272.12 519.4v-9.4h1.48v9.4zM273.68 519.4v-2.6h1.48v2.6zM278.33 519.4v-5.5h1.48v5.5zM281.44 519.4v-11.2h1.48v11.2zM282.99 519.4v-4.1h1.48v4.1zM284.55 519.4v-5.8h1.48v5.8zM286.10 519.4v-7.3h1.48v7.3zM288.36 519.4v-128.0h1.48v128.0zM293.86 519.4v-9.0h1.48v9.0zM300.08 519.4v-4.2h1.48v4.2zM303.18 519.4v-3.6h1.48v3.6zM306.29 519.4v-1.0h1.48v1.0zM314.05 519.4v-2.7h1.48v2.7zM315.61 519.4v-1.3h1.48v1.3zM318.71 519.4v-4.7h1.48v4.7zM320.27 519.4v-4.8h1.48v4.8zM326.48 519.4v-1.3h1.48v1.3zM327.26 519.4v-6.5h1.48v6.5zM331.14 519.4v-1.5h1.48v1.5zM340.45 519.4v-5.6h1.48v5.6zM345.11 519.4v-1.3h1.48v1.3zM346.67 519.4v-1.0h1.48v1.0zM348.22 519.4v-2.8h1.48v2.8zM349.77 519.4v-2.9h1.48v2.9zM355.98 519.4v-1.0h1.48v1.0zM359.09 519.4v-1.7h1.48v1.7zM360.64 519.4v-2.6h1.48v2.6zM364.76 519.4v-10.0h1.48v10.0zM366.86 519.4v-4.0h1.48v4.0zM368.41 519.4v-1.3h1.48v1.3zM369.96 519.4v-1.5h1.48v1.5zM371.51 519.4v-2.9h1.48v2.9zM373.07 519.4v-2.2h1.48v2.2zM379.28 519.4v-0.9h1.48v0.9zM382.39 519.4v-2.6h1.48v2.6zM383.94 519.4v-2.9h1.48v2.9zM391.70 519.4v-0.7h1.48v0.7zM401.02 519.4v-3.4h1.48v3.4zM402.57 519.4v-2.1h1.48v2.1zM404.13 519.4v-3.3h1.48v3.3zM405.68 519.4v-1.8h1.48v1.8zM407.23 519.4v-0.8h1.48v0.8zM416.55 519.4v-3.4h1.48v3.4zM418.10 519.4v-2.6h1.48v2.6zM419.66 519.4v-1.8h1.48v1.8zM421.21 519.4v-0.7h1.48v0.7zM422.76 519.4v-0.7h1.48v0.7zM428.98 519.4v-1.5h1.48v1.5zM432.08 519.4v-2.0h1.48v2.0zM433.63 519.4v-0.9h1.48v0.9zM435.19 519.4v-0.9h1.48v0.9zM438.29 519.4v-0.7h1.48v0.7zM441.40 519.4v-2.3h1.48v2.3zM447.61 519.4v-3.3h1.48v3.3zM449.16 519.4v-1.5h1.48v1.5zM450.72 519.4v-2.2h1.48v2.2zM452.27 519.4v-3.3h1.48v3.3zM458.48 519.4v-1.6h1.48v1.6zM460.04 519.4v-1.3h1.48v1.3zM461.59 519.4v-1.3h1.48v1.3zM464.69 519.4v-2.4h1.48v2.4zM466.25 519.4v-3.4h1.48v3.4zM469.35 519.4v-0.7h1.48v0.7zM474.01 519.4v-2.1h1.48v2.1zM475.57 519.4v-1.8h1.48v1.8zM477.12 519.4v-2.3h1.48v2.3zM478.67 519.4v-0.8h1.48v0.8zM480.22 519.4v-3.0h1.48v3.0zM481.78 519.4v-0.7h1.48v0.7zM483.33 519.4v-0.9h1.48v0.9zM486.44 519.4v-4.2h1.48v4.2zM495.75 519.4v-1.5h1.48v1.5zM498.86 519.4v-6.4h1.48v6.4zM500.41 519.4v-4.2h1.48v4.2zM503.52 519.4v-6.6h1.48v6.6zM508.18 519.4v-4.2h1.48v4.2zM510.26 519.4v-10.5h1.48v10.5zM514.39 519.4v-6.9h1.48v6.9zM515.94 519.4v-8.1h1.48v8.1zM517.50 519.4v-2.6h1.48v2.6zM520.60 519.4v-7.4h1.48v7.4zM522.16 519.4v-3.0h1.48v3.0zM523.71 519.4v-3.6h1.48v3.6zM526.81 519.4v-7.2h1.48v7.2zM529.26 519.4v-12.0h1.48v12.0zM537.69 519.4v-3.6h1.48v3.6zM539.24 519.4v-3.9h1.48v3.9zM543.90 519.4v-8.9h1.48v8.9zM544.76 519.4v-12.0h1.48v12.0zM546.76 519.4v-12.0h1.48v12.0zM548.56 519.4v-1.8h1.48v1.8zM550.11 519.4v-5.3h1.48v5.3zM556.32 519.4v-1.9h1.48v1.9zM567.19 519.4v-2.6h1.48v2.6zM568.75 519.4v-7.3h1.48v7.3zM574.96 519.4v-5.9h1.48v5.9zM579.62 519.4v-7.2h1.48v7.2zM581.17 519.4v-3.5h1.48v3.5zM584.96 519.4v-18.5h1.48v18.5zM587.38 519.4v-2.5h1.48v2.5zM590.49 519.4v-2.1h1.48v2.1zM598.25 519.4v-3.9h1.48v3.9zM604.46 519.4v-4.0h1.48v4.0zM606.02 519.4v-1.6h1.48v1.6zM610.68 519.4v-5.9h1.48v5.9zM613.78 519.4v-6.8h1.48v6.8zM616.89 519.4v-3.2h1.48v3.2zM619.99 519.4v-5.7h1.48v5.7zM621.55 519.4v-3.5h1.48v3.5zM623.10 519.4v-2.0h1.48v2.0zM624.65 519.4v-4.5h1.48v4.5zM626.21 519.4v-1.2h1.48v1.2zM627.76 519.4v-2.4h1.48v2.4zM630.87 519.4v-1.4h1.48v1.4zM637.08 519.4v-1.9h1.48v1.9zM643.29 519.4v-1.2h1.48v1.2zM644.84 519.4v-4.7h1.48v4.7zM646.40 519.4v-3.0h1.48v3.0zM647.95 519.4v-6.8h1.48v6.8zM649.50 519.4v-5.9h1.48v5.9zM651.05 519.4v-5.3h1.48v5.3zM652.61 519.4v-6.4h1.48v6.4zM654.26 519.4v-8.5h1.48v8.5zM655.71 519.4v-3.4h1.48v3.4zM657.27 519.4v-1.4h1.48v1.4zM665.03 519.4v-1.3h1.48v1.3zM666.58 519.4v-2.9h1.48v2.9zM669.69 519.4v-1.1h1.48v1.1zM671.24 519.4v-4.6h1.48v4.6zM674.35 519.4v-1.1h1.48v1.1zM677.46 519.4v-3.9h1.48v3.9zM681.26 519.4v-14.0h1.48v14.0zM683.67 519.4v-1.8h1.48v1.8zM685.22 519.4v-4.8h1.48v4.8zM686.77 519.4v-6.7h1.48v6.7zM688.33 519.4v-4.7h1.48v4.7zM689.88 519.4v-5.6h1.48v5.6zM694.54 519.4v-2.1h1.48v2.1zM697.64 519.4v-1.8h1.48v1.8zM699.20 519.4v-2.0h1.48v2.0zM700.75 519.4v-3.6h1.48v3.6zM702.30 519.4v-9.1h1.48v9.1zM705.41 519.4v-7.2h1.48v7.2zM711.62 519.4v-9.9h1.48v9.9zM713.17 519.4v-6.0h1.48v6.0zM716.28 519.4v-3.1h1.48v3.1zM719.39 519.4v-4.5h1.48v4.5zM720.94 519.4v-7.9h1.48v7.9zM722.49 519.4v-2.0h1.48v2.0zM725.60 519.4v-3.2h1.48v3.2zM727.15 519.4v-2.0h1.48v2.0zM734.92 519.4v-1.7h1.48v1.7zM736.47 519.4v-5.1h1.48v5.1zM739.58 519.4v-3.3h1.48v3.3zM744.23 519.4v-4.8h1.48v4.8zM745.79 519.4v-5.0h1.48v5.0zM747.34 519.4v-8.9h1.48v8.9zM750.45 519.4v-1.9h1.48v1.9zM752.00 519.4v-2.7h1.48v2.7zM753.55 519.4v-2.5h1.48v2.5zM755.11 519.4v-7.9h1.48v7.9zM759.76 519.4v-9.9h1.48v9.9zM765.98 519.4v-5.4h1.48v5.4zM767.53 519.4v-1.6h1.48v1.6zM769.08 519.4v-1.4h1.48v1.4zM770.64 519.4v-3.6h1.48v3.6zM772.19 519.4v-3.3h1.48v3.3zM773.74 519.4v-3.6h1.48v3.6zM775.29 519.4v-4.1h1.48v4.1zM776.85 519.4v-4.3h1.48v4.3zM779.95 519.4v-2.9h1.48v2.9zM781.51 519.4v-4.0h1.48v4.0zM784.61 519.4v-3.0h1.48v3.0zM786.17 519.4v-5.7h1.48v5.7zM790.82 519.4v-3.3h1.48v3.3zM793.93 519.4v-2.1h1.48v2.1zM795.48 519.4v-4.8h1.48v4.8zM797.04 519.4v-4.8h1.48v4.8zM798.59 519.4v-5.0h1.48v5.0zM800.14 519.4v-3.8h1.48v3.8zM801.70 519.4v-1.3h1.48v1.3zM803.25 519.4v-3.1h1.48v3.1zM804.80 519.4v-1.2h1.48v1.2zM811.01 519.4v-6.4h1.48v6.4zM814.12 519.4v-2.6h1.48v2.6zM817.23 519.4v-3.6h1.48v3.6zM821.88 519.4v-6.7h1.48v6.7zM826.54 519.4v-6.2h1.48v6.2zM829.65 519.4v-3.7h1.48v3.7zM831.20 519.4v-1.1h1.48v1.1zM834.31 519.4v-4.9h1.48v4.9zM837.41 519.4v-1.5h1.48v1.5zM838.97 519.4v-4.7h1.48v4.7zM840.52 519.4v-4.3h1.48v4.3zM846.73 519.4v-1.2h1.48v1.2zM848.29 519.4v-0.9h1.48v0.9zM851.39 519.4v-4.7h1.48v4.7zM852.94 519.4v-3.5h1.48v3.5zM860.71 519.4v-1.1h1.48v1.1zM862.26 519.4v-3.2h1.48v3.2zM865.37 519.4v-4.6h1.48v4.6zM866.92 519.4v-1.3h1.48v1.3zM868.47 519.4v-4.9h1.48v4.9zM874.69 519.4v-2.5h1.48v2.5zM876.24 519.4v-2.9h1.48v2.9zM877.79 519.4v-1.3h1.48v1.3zM880.90 519.4v-3.8h1.48v3.8zM884.00 519.4v-1.2h1.48v1.2zM887.11 519.4v-2.2h1.48v2.2zM888.66 519.4v-1.8h1.48v1.8zM890.22 519.4v-2.3h1.48v2.3zM891.77 519.4v-2.6h1.48v2.6zM894.88 519.4v-3.9h1.48v3.9zM897.98 519.4v-6.6h1.48v6.6zM901.09 519.4v-7.8h1.48v7.8zM907.30 519.4v-2.6h1.48v2.6zM908.85 519.4v-2.5h1.48v2.5zM913.51 519.4v-5.4h1.48v5.4zM915.06 519.4v-2.3h1.48v2.3zM916.62 519.4v-1.7h1.48v1.7zM918.17 519.4v-4.1h1.48v4.1zM919.72 519.4v-2.8h1.48v2.8zM922.83 519.4v-5.4h1.48v5.4zM924.26 519.4v-10.0h1.48v10.0zM927.49 519.4v-1.7h1.48v1.7zM929.04 519.4v-5.9h1.48v5.9zM931.26 519.4v-11.5h1.48v11.5zM933.26 519.4v-8.5h1.48v8.5zM935.25 519.4v-2.2h1.48v2.2zM936.81 519.4v-8.5h1.48v8.5zM938.36 519.4v-1.8h1.48v1.8zM939.91 519.4v-3.5h1.48v3.5zM943.02 519.4v-4.6h1.48v4.6zM946.12 519.4v-4.3h1.48v4.3z" fill="#13701a"/>
<path d="M12.26 519.4v-17.0h1.48v17.0zM14.33 519.4v-4.4h1.48v4.4zM15.26 519.4v-12.0h1.48v12.0zM19.26 519.4v-14.0h1.48v14.0zM20.54 519.4v-9.8h1.48v9.8zM22.09 519.4v-2.9h1.48v2.9zM25.20 519.4v-2.2h1.48v2.2zM32.96 519.4v-2.3h1.48v2.3zM34.51 519.4v-5.8h1.48v5.8zM36.07 519.4v-4.6h1.48v4.6zM39.17 519.4v-1.6h1.48v1.6zM40.73 519.4v-4.1h1.48v4.1zM42.28 519.4v-4.7h1.48v4.7zM46.94 519.4v-5.2h1.48v5.2zM50.04 519.4v-1.0h1.48v1.0zM51.60 519.4v-4.2h1.48v4.2zM57.81 519.4v-1.0h1.48v1.0zM62.47 519.4v-1.3h1.48v1.3zM64.02 519.4v-1.1h1.48v1.1zM65.57 519.4v-1.1h1.48v1.1zM68.68 519.4v-5.6h1.48v5.6zM71.79 519.4v-1.3h1.48v1.3zM74.89 519.4v-1.0h1.48v1.0zM76.44 519.4v-1.3h1.48v1.3zM78.00 519.4v-4.2h1.48v4.2zM81.10 519.4v-1.0h1.48v1.0zM82.66 519.4v-1.4h1.48v1.4zM85.76 519.4v-5.5h1.48v5.5zM93.53 519.4v-4.0h1.48v4.0zM98.19 519.4v-2.1h1.48v2.1zM105.95 519.4v-0.9h1.48v0.9zM112.16 519.4v-4.0h1.48v4.0zM113.72 519.4v-0.7h1.48v0.7zM115.27 519.4v-1.7h1.48v1.7zM118.38 519.4v-2.3h1.48v2.3zM121.48 519.4v-4.4h1.48v4.4zM126.14 519.4v-0.7h1.48v0.7zM130.80 519.4v-1.9h1.48v1.9zM133.91 519.4v-0.8h1.48v0.8zM135.46 519.4v-3.0h1.48v3.0zM137.01 519.4v-3.0h1.48v3.0zM141.67 519.4v-3.9h1.48v3.9zM143.22 519.4v-1.6h1.48v1.6zM147.88 519.4v-2.3h1.48v2.3zM150.99 519.4v-4.5h1.48v4.5zM154.09 519.4v-3.0h1.48v3.0zM157.20 519.4v-0.8h1.48v0.8zM158.75 519.4v-0.7h1.48v0.7zM160.31 519.4v-1.9h1.48v1.9zM168.07 519.4v-1.0h1.48v1.0zM169.62 519.4v-3.9h1.48v3.9zM171.18 519.4v-1.7h1.48v1.7zM172.73 519.4v-1.3h1.48v1.3zM175.84 519.4v-4.2h1.48v4.2zM188.26 519.4v-1.5h1.48v1.5zM189.81 519.4v-3.8h1.48v3.8zM191.37 519.4v-2.0h1.48v2.0zM192.92 519.4v-7.0h1.48v7.0zM196.03 519.4v-6.2h1.48v6.2zM199.13 519.4v-2.2h1.48v2.2zM210.00 519.4v-6.6h1.48v6.6zM217.77 519.4v-2.5h1.48v2.5zM222.43 519.4v-3.4h1.48v3.4zM229.26 519.4v-11.0h1.48v11.0zM233.30 519.4v-10.2h1.48v10.2zM236.40 519.4v-7.7h1.48v7.7zM239.51 519.4v-2.7h1.48v2.7zM241.06 519.4v-11.4h1.48v11.4zM242.62 519.4v-5.5h1.48v5.5zM253.49 519.4v-8.7h1.48v8.7zM255.04 519.4v-3.5h1.48v3.5zM259.70 519.4v-9.3h1.48v9.3zM261.25 519.4v-10.9h1.48v10.9zM265.91 519.4v-3.2h1.48v3.2zM269.02 519.4v-9.3h1.48v9.3zM275.23 519.4v-11.2h1.48v11.2zM276.78 519.4v-5.9h1.48v5.9zM279.89 519.4v-6.2h1.48v6.2zM289.21 519.4v-11.0h1.48v11.0zM290.76 519.4v-3.0h1.48v3.0zM292.31 519.4v-2.2h1.48v2.2zM295.42 519.4v-4.8h1.48v4.8zM296.97 519.4v-2.5h1.48v2.5zM298.52 519.4v-10.5h1.48v10.5zM301.63 519.4v-1.3h1.48v1.3zM304.74 519.4v-1.9h1.48v1.9zM307.84 519.4v-1.1h1.48v1.1zM309.39 519.4v-1.4h1.48v1.4zM310.95 519.4v-2.7h1.48v2.7zM312.50 519.4v-1.9h1.48v1.9zM317.16 519.4v-3.3h1.48v3.3zM321.82 519.4v-4.0h1.48v4.0zM323.37 519.4v-5.1h1.48v5.1zM324.92 519.4v-1.7h1.48v1.7zM329.58 519.4v-1.4h1.48v1.4zM332.69 519.4v-4.6h1.48v4.6zM334.24 519.4v-4.3h1.48v4.3zM335.80 519.4v-2.1h1.48v2.1zM337.35 519.4v-0.9h1.48v0.9zM338.90 519.4v-3.6h1.48v3.6zM342.01 519.4v-2.6h1.48v2.6zM343.56 519.4v-2.6h1.48v2.6zM351.33 519.4v-1.2h1.48v1.2zM352.88 519.4v-4.6h1.48v4.6zM354.43 519.4v-5.3h1.48v5.3zM357.54 519.4v-2.3h1.48v2.3zM362.20 519.4v-3.1h1.48v3.1zM363.75 519.4v-3.7h1.48v3.7zM374.62 519.4v-1.9h1.48v1.9zM376.17 519.4v-1.8h1.48v1.8zM377.73 519.4v-3.3h1.48v3.3zM380.83 519.4v-2.3h1.48v2.3zM385.49 519.4v-2.1h1.48v2.1zM387.04 519.4v-2.4h1.48v2.4zM388.60 519.4v-2.2h1.48v2.2zM390.15 519.4v-1.0h1.48v1.0zM393.26 519.4v-1.9h1.48v1.9zM394.81 519.4v-0.8h1.48v0.8zM396.36 519.4v-2.0h1.48v2.0zM397.92 519.4v-2.0h1.48v2.0zM399.47 519.4v-1.6h1.48v1.6zM408.79 519.4v-0.7h1.48v0.7zM410.34 519.4v-1.1h1.48v1.1zM411.89 519.4v-0.8h1.48v0.8zM413.45 519.4v-1.6h1.48v1.6zM415.00 519.4v-3.2h1.48v3.2zM424.32 519.4v-0.7h1.48v0.7zM425.87 519.4v-1.8h1.48v1.8zM427.42 519.4v-3.1h1.48v3.1zM430.53 519.4v-1.1h1.48v1.1zM436.74 519.4v-0.8h1.48v0.8zM439.85 519.4v-1.2h1.48v1.2zM442.95 519.4v-3.3h1.48v3.3zM444.51 519.4v-0.7h1.48v0.7zM446.06 519.4v-1.3h1.48v1.3zM453.82 519.4v-1.8h1.48v1.8zM455.38 519.4v-1.9h1.48v1.9zM456.93 519.4v-0.7h1.48v0.7zM463.14 519.4v-1.7h1.48v1.7zM467.80 519.4v-2.3h1.48v2.3zM470.91 519.4v-2.5h1.48v2.5zM472.46 519.4v-1.1h1.48v1.1zM484.88 519.4v-5.0h1.48v5.0zM487.99 519.4v-1.6h1.48v1.6zM489.54 519.4v-4.3h1.48v4.3zM491.26 519.4v-11.5h1.48v11.5zM492.65 519.4v-2.0h1.48v2.0zM494.76 519.4v-8.5h1.48v8.5zM497.31 519.4v-6.8h1.48v6.8zM501.97 519.4v-8.5h1.48v8.5zM505.07 519.4v-3.3h1.48v3.3zM506.63 519.4v-7.7h1.48v7.7zM511.28 519.4v-1.9h1.48v1.9zM512.84 519.4v-5.6h1.48v5.6zM519.05 519.4v-1.9h1.48v1.9zM525.26 519.4v-3.7h1.48v3.7zM528.37 519.4v-10.0h1.48v10.0zM531.47 519.4v-8.4h1.48v8.4zM533.03 519.4v-3.3h1.48v3.3zM534.58 519.4v-10.3h1.48v10.3zM536.13 519.4v-2.8h1.48v2.8zM540.79 519.4v-2.4h1.48v2.4zM542.34 519.4v-8.4h1.48v8.4zM551.26 519.4v-10.0h1.48v10.0zM553.22 519.4v-8.5h1.48v8.5zM554.77 519.4v-5.4h1.48v5.4zM557.87 519.4v-7.6h1.48v7.6zM559.43 519.4v-1.9h1.48v1.9zM560.98 519.4v-2.2h1.48v2.2zM562.53 519.4v-6.5h1.48v6.5zM564.09 519.4v-2.6h1.48v2.6zM565.64 519.4v-3.5h1.48v3.5zM570.30 519.4v-3.3h1.48v3.3zM571.85 519.4v-5.0h1.48v5.0zM573.40 519.4v-6.8h1.48v6.8zM576.51 519.4v-6.2h1.48v6.2zM578.06 519.4v-6.0h1.48v6.0zM582.72 519.4v-5.7h1.48v5.7zM585.83 519.4v-5.2h1.48v5.2zM588.93 519.4v-1.7h1.48v1.7zM592.04 519.4v-1.3h1.48v1.3zM593.59 519.4v-1.4h1.48v1.4zM595.15 519.4v-5.5h1.48v5.5zM596.70 519.4v-1.3h1.48v1.3zM599.81 519.4v-1.2h1.48v1.2zM601.36 519.4v-1.6h1.48v1.6zM602.91 519.4v-1.8h1.48v1.8zM607.57 519.4v-1.6h1.48v1.6zM609.12 519.4v-2.2h1.48v2.2zM612.23 519.4v-1.9h1.48v1.9zM615.34 519.4v-3.7h1.48v3.7zM618.44 519.4v-1.2h1.48v1.2zM629.31 519.4v-4.7h1.48v4.7zM632.42 519.4v-2.1h1.48v2.1zM633.97 519.4v-6.0h1.48v6.0zM635.52 519.4v-4.1h1.48v4.1zM638.63 519.4v-1.4h1.48v1.4zM640.18 519.4v-1.1h1.48v1.1zM641.74 519.4v-5.8h1.48v5.8zM658.82 519.4v-2.1h1.48v2.1zM660.37 519.4v-1.2h1.48v1.2zM661.93 519.4v-2.9h1.48v2.9zM663.48 519.4v-2.3h1.48v2.3zM668.14 519.4v-5.6h1.48v5.6zM672.80 519.4v-3.6h1.48v3.6zM675.90 519.4v-5.4h1.48v5.4zM678.26 519.4v-21.5h1.48v21.5zM682.11 519.4v-2.5h1.48v2.5zM691.43 519.4v-1.4h1.48v1.4zM692.99 519.4v-4.4h1.48v4.4zM696.09 519.4v-8.0h1.48v8.0zM703.86 519.4v-4.5h1.48v4.5zM706.96 519.4v-3.4h1.48v3.4zM708.52 519.4v-3.6h1.48v3.6zM710.07 519.4v-3.6h1.48v3.6zM714.73 519.4v-1.6h1.48v1.6zM717.83 519.4v-1.8h1.48v1.8zM724.05 519.4v-8.8h1.48v8.8zM728.70 519.4v-9.9h1.48v9.9zM730.26 519.4v-6.6h1.48v6.6zM731.81 519.4v-2.2h1.48v2.2zM733.36 519.4v-5.6h1.48v5.6zM738.02 519.4v-3.0h1.48v3.0zM741.13 519.4v-1.9h1.48v1.9zM742.68 519.4v-1.9h1.48v1.9zM748.89 519.4v-7.8h1.48v7.8zM756.66 519.4v-4.8h1.48v4.8zM758.21 519.4v-1.6h1.48v1.6zM761.32 519.4v-4.2h1.48v4.2zM762.87 519.4v-4.3h1.48v4.3zM764.42 519.4v-2.4h1.48v2.4zM778.40 519.4v-6.8h1.48v6.8zM782.96 519.4v-21.0h1.48v21.0zM787.72 519.4v-2.6h1.48v2.6zM789.27 519.4v-3.6h1.48v3.6zM792.38 519.4v-2.7h1.48v2.7zM806.35 519.4v-3.3h1.48v3.3zM807.26 519.4v-9.0h1.48v9.0zM809.46 519.4v-1.7h1.48v1.7zM812.57 519.4v-4.3h1.48v4.3zM815.67 519.4v-1.7h1.48v1.7zM818.78 519.4v-1.3h1.48v1.3zM820.33 519.4v-1.3h1.48v1.3zM823.44 519.4v-1.8h1.48v1.8zM824.99 519.4v-2.1h1.48v2.1zM828.10 519.4v-2.5h1.48v2.5zM832.76 519.4v-1.5h1.48v1.5zM835.86 519.4v-2.2h1.48v2.2zM842.07 519.4v-2.2h1.48v2.2zM843.63 519.4v-4.6h1.48v4.6zM845.18 519.4v-1.2h1.48v1.2zM849.84 519.4v-3.6h1.48v3.6zM854.50 519.4v-3.4h1.48v3.4zM856.05 519.4v-2.1h1.48v2.1zM857.60 519.4v-1.3h1.48v1.3zM859.16 519.4v-3.5h1.48v3.5zM863.82 519.4v-1.8h1.48v1.8zM870.03 519.4v-1.4h1.48v1.4zM870.96 519.4v-73.5h1.48v73.5zM873.13 519.4v-2.1h1.48v2.1zM879.35 519.4v-0.9h1.48v0.9zM882.45 519.4v-1.4h1.48v1.4zM885.56 519.4v-5.3h1.48v5.3zM893.32 519.4v-1.7h1.48v1.7zM896.43 519.4v-4.7h1.48v4.7zM898.96 519.4v-14.5h1.48v14.5zM902.64 519.4v-5.8h1.48v5.8zM904.19 519.4v-4.1h1.48v4.1zM905.75 519.4v-7.9h1.48v7.9zM910.41 519.4v-4.7h1.48v4.7zM911.96 519.4v-5.7h1.48v5.7zM921.28 519.4v-1.8h1.48v1.8zM925.94 519.4v-2.1h1.48v2.1zM932.15 519.4v-1.9h1.48v1.9zM941.47 519.4v-10.4h1.48v10.4zM944.57 519.4v-10.6h1.48v10.6zM947.68 519.4v-1.7h1.48v1.7z" fill="#d3202c"/>
<text x="1019.3" y="431.6" font-size="8" fill="#3c3c3c" text-anchor="end">6 m</text>
<text x="1019.3" y="460.8" font-size="8" fill="#3c3c3c" text-anchor="end">4 m</text>
<text x="1019.3" y="489" font-size="8" fill="#3c3c3c" text-anchor="end">2 m</text>
<path d="M1002.3 509H1018Q1020 509 1020 511V517.3Q1020 519.3 1018 519.3H1000.5Q998.6 519.3 999.3 517.5L1000.6 510.6Q1001 509 1002.3 509z" fill="#3b9a42"/>
<text x="1002.6" y="517.3" font-size="7.7" fill="#fff" clip-path="url(#cright)" stroke="#fff" stroke-width="0.15">185 k</text>
<path d="M1006.9 393.1L1011.6999999999999 397.9M1011.6999999999999 393.1L1006.9 397.9" stroke="#555" stroke-width="0.9" fill="none"/>
<path d="M1006.9 529.0L1011.6999999999999 533.8M1011.6999999999999 529.0L1006.9 533.8" stroke="#555" stroke-width="0.9" fill="none"/>
<clipPath id="ctop"><rect x="0" y="520" width="1020" height="29.5"/></clipPath>
<clipPath id="cbot"><rect x="0" y="631.45" width="1020" height="20.549999999999955"/></clipPath>
<clipPath id="cpan"><rect x="0" y="520.4" width="1020" height="131.60000000000002"/></clipPath>
<path d="M19.3 549.5 L19.3 652.0 L19.5 631.2 L20.0 628.4 L21.0 601.1 L22.1 620.0 L23.1 607.4 L25.2 588.5 L27.3 585.4 L29.4 587.5 L31.5 599.0 L33.6 611.6 L35.7 614.8 L36.8 624.2 L37.8 599.0 L38.9 571.7 L39.9 569.6 L41.0 557.0 L42.0 546.5 L43.1 567.5 L44.1 599.0 L45.2 603.2 L47.3 592.7 L47.9 613.7 L49.4 588.5 L51.5 586.4 L53.6 580.1 L55.7 561.2 L57.8 550.7 L59.5 545.5 L60.5 571.7 L64.1 572.8 L65.5 550.7 L67.2 527.6 L68.9 523.4 L70.4 536.0 L72.5 538.1 L73.9 536.0 L75.2 552.8 L77.3 553.9 L78.4 599.0 L79.4 581.2 L80.9 586.4 L82.4 591.7 L84.0 584.3 L85.7 592.7 L87.2 578.0 L88.7 586.4 L89.9 567.5 L91.0 558.1 L92.0 575.9 L93.5 594.8 L94.5 586.4 L95.8 613.7 L97.1 588.5 L98.3 578.0 L99.2 594.8 L100.4 575.9 L101.7 596.9 L102.9 580.1 L104.2 596.9 L105.5 586.4 L106.7 598.0 L108.2 594.8 L109.7 584.3 L111.3 586.4 L113.0 603.2 L114.5 633.7 L116.6 622.1 L118.1 623.2 L119.3 630.5 L120.8 626.3 L122.3 628.4 L123.9 638.9 L127.1 643.6 L128.6 632.6 L130.3 605.3 L131.5 596.9 L132.8 601.1 L134.5 620.0 L136.1 634.7 L137.2 642.1 L138.7 609.5 L139.7 601.1 L141.2 573.8 L142.4 550.7 L144.5 544.4 L146.0 548.6 L148.1 560.2 L149.6 548.6 L150.8 557.0 L152.9 556.0 L155.5 551.8 L158.0 549.7 L159.2 561.2 L160.7 584.3 L162.2 620.0 L163.4 610.6 L164.9 624.2 L166.4 631.6 L167.6 596.9 L169.1 599.0 L170.6 609.5 L172.3 622.1 L173.5 599.0 L174.8 561.2 L176.5 548.6 L178.6 536.0 L179.8 544.4 L181.1 569.6 L182.4 584.3 L183.8 575.9 L185.3 566.5 L187.0 582.2 L188.7 611.6 L190.1 635.8 L191.6 592.7 L193.3 584.3 L195.4 575.9 L197.5 552.8 L199.2 567.5 L200.0 567.5 L201.1 542.3 L202.5 552.8 L204.2 540.2 L207.4 529.7 L210.5 525.1 L216.8 524.5 L220.0 527.6 L222.1 525.5 L223.5 536.0 L225.2 528.7 L226.9 546.5 L227.9 535.0 L229.0 557.0 L230.0 583.3 L231.5 562.3 L233.2 566.5 L235.7 557.0 L237.8 544.4 L241.0 535.0 L244.1 531.8 L246.2 529.3 L247.9 542.3 L248.9 537.1 L250.0 567.5 L250.8 595.9 L252.1 566.5 L254.2 565.4 L255.7 574.9 L257.1 575.9 L258.8 563.3 L260.5 559.1 L261.6 578.0 L262.4 602.2 L263.7 573.8 L265.1 551.8 L266.4 569.6 L267.2 582.2 L269.3 563.3 L271.4 559.1 L273.1 596.9 L274.8 580.1 L276.5 569.6 L277.7 579.1 L279.4 567.5 L280.9 598.0 L281.9 610.6 L283.6 594.8 L285.1 569.6 L286.6 549.7 L288.2 542.3 L290.8 531.4 L291.8 557.0 L292.9 584.3 L294.1 609.5 L295.6 607.4 L297.1 609.5 L298.7 615.8 L300.8 621.1 L302.5 619.0 L303.4 625.3 L304.6 599.0 L306.1 584.3 L308.2 566.5 L309.2 575.9 L310.5 593.8 L311.8 586.4 L313.4 605.3 L315.1 620.0 L316.2 619.0 L317.2 584.3 L318.1 562.3 L319.3 569.6 L320.6 582.2 L322.3 563.3 L324.4 554.9 L326.1 577.0 L327.7 575.9 L329.2 587.5 L330.7 574.9 L332.4 574.9 L334.0 588.5 L334.9 615.8 L336.1 636.8 L337.4 650.5 L338.7 624.2 L339.7 603.2 L341.2 588.5 L342.9 580.1 L345.0 569.6 L347.1 557.0 L349.6 546.5 L350.6 569.6 L351.7 593.8 L352.9 578.0 L354.4 584.3 L355.9 587.5 L357.6 596.9 L358.8 573.8 L360.1 557.0 L361.8 552.8 L363.9 546.5 L365.5 535.0 L367.0 550.7 L368.1 556.0 L369.3 544.4 L371.2 541.3 L372.7 541.3 L373.9 549.7 L375.0 578.0 L376.1 593.8 L377.5 595.9 L378.6 602.2 L380.3 584.3 L382.4 583.3 L384.9 583.3 L386.6 594.8 L388.0 594.8 L389.1 562.3 L390.1 535.0 L391.2 569.6 L392.4 596.9 L393.7 586.4 L395.4 599.0 L396.8 608.5 L398.5 603.2 L400.0 599.0 L401.7 613.7 L403.8 619.0 L405.3 609.5 L407.4 627.4 L408.8 599.0 L410.1 568.6 L412.2 567.5 L413.7 584.3 L415.1 603.2 L416.4 611.6 L417.4 594.8 L418.5 622.1 L419.7 599.0 L421.0 580.1 L422.7 571.7 L424.2 594.8 L425.6 613.7 L427.3 599.0 L429.0 594.8 L430.5 613.7 L431.9 626.3 L433.2 627.4 L434.2 599.0 L435.7 582.2 L437.4 588.5 L438.9 582.2 L440.3 607.4 L443.1 607.4 L444.5 590.6 L445.8 563.3 L448.7 562.3 L450.4 538.1 L451.7 563.3 L452.5 586.4 L453.8 609.5 L455.7 629.5 L457.1 613.7 L458.8 584.3 L460.1 586.4 L461.3 556.0 L462.6 571.7 L464.1 599.0 L465.5 603.2 L466.8 595.9 L468.3 609.5 L469.7 599.0 L471.4 608.5 L473.1 590.6 L474.6 570.0 L476.7 571.7 L478.2 580.1 L479.4 599.0 L480.9 603.2 L482.4 611.6 L484.0 584.3 L485.7 559.1 L487.2 547.6 L488.2 557.0 L489.5 588.5 L490.3 578.0 L491.4 599.0 L492.0 623.2 L493.5 599.0 L495.0 588.5 L495.8 607.4 L497.1 578.0 L498.3 567.5 L499.6 584.3 L500.8 593.8 L502.5 585.4 L504.6 586.4 L506.1 592.7 L507.6 595.9 L508.8 588.5 L509.7 609.5 L510.9 568.6 L512.4 578.0 L513.4 594.8 L514.5 601.1 L515.5 562.3 L517.6 562.3 L519.3 578.0 L520.8 568.6 L527.1 568.6 L528.2 586.4 L529.4 557.0 L530.7 531.8 L531.9 532.2 L532.8 567.5 L534.0 584.3 L535.1 575.9 L536.6 599.0 L538.2 584.3 L539.7 573.8 L541.2 578.0 L542.9 598.0 L544.5 584.3 L546.0 557.0 L548.1 536.0 L549.2 548.6 L550.4 542.3 L551.7 550.7 L552.9 552.8 L554.4 545.5 L555.9 557.0 L557.6 550.7 L559.2 542.3 L560.9 538.1 L561.8 565.4 L562.8 584.3 L564.3 567.5 L565.5 584.3 L567.0 565.4 L568.5 552.8 L571.8 552.4 L573.3 542.3 L574.8 535.0 L576.5 541.3 L578.6 536.0 L581.1 526.6 L583.2 526.6 L584.5 542.3 L585.3 553.9 L586.1 535.0 L587.4 546.5 L588.7 556.0 L591.2 565.4 L592.9 584.3 L594.3 620.0 L595.8 599.0 L597.1 578.0 L598.5 588.5 L600.0 631.6 L601.1 624.2 L602.1 650.5 L603.2 620.0 L604.2 601.1 L605.9 586.4 L607.4 581.2 L608.8 594.8 L610.5 593.8 L612.2 594.8 L613.7 584.3 L615.1 596.9 L616.4 563.3 L618.5 559.1 L620.0 567.5 L621.0 554.9 L622.7 549.7 L624.8 548.6 L626.3 545.5 L627.9 556.0 L630.5 557.0 L631.9 553.9 L633.2 569.6 L634.2 589.6 L635.7 569.6 L637.4 550.7 L638.9 542.3 L640.5 535.0 L641.6 557.0 L642.4 577.0 L643.7 557.0 L645.2 546.5 L646.6 535.0 L649.4 530.8 L652.5 526.6 L655.7 525.1 L657.1 538.1 L658.8 550.7 L660.1 557.0 L661.3 575.9 L663.0 590.6 L664.7 594.8 L666.4 602.2 L667.6 578.0 L668.9 590.6 L670.4 575.9 L671.4 570.7 L672.7 586.4 L674.4 595.9 L676.1 588.5 L677.7 594.8 L679.4 615.8 L680.7 632.6 L681.9 603.2 L683.2 582.2 L685.1 562.3 L687.2 549.7 L688.7 541.3 L690.3 546.5 L692.0 542.3 L693.5 536.0 L695.0 553.9 L697.1 551.8 L698.3 536.0 L699.8 527.6 L702.9 523.8 L703.8 546.5 L705.0 565.4 L706.7 580.1 L708.4 592.7 L709.7 603.2 L710.9 614.8 L712.4 591.7 L713.9 594.8 L715.5 605.3 L716.8 608.5 L718.1 602.2 L719.7 601.1 L721.4 608.5 L722.7 615.8 L723.9 622.1 L725.2 607.4 L726.5 600.1 L727.3 609.5 L728.6 574.9 L729.4 594.8 L730.3 608.5 L731.3 575.9 L732.8 580.1 L734.5 564.4 L736.6 556.0 L738.2 540.2 L739.9 541.3 L741.2 552.8 L742.4 557.0 L743.9 535.0 L746.0 530.1 L747.1 548.6 L748.1 565.4 L749.6 561.2 L750.8 588.5 L752.3 589.6 L753.8 578.0 L755.5 566.5 L756.5 584.3 L757.6 602.2 L759.2 610.6 L760.9 615.8 L762.2 620.0 L763.9 635.8 L765.5 624.2 L767.0 611.6 L768.5 590.6 L770.2 567.5 L771.8 548.6 L773.3 541.3 L774.8 539.8 L776.1 549.7 L776.9 554.9 L778.2 544.4 L779.6 539.2 L781.1 536.0 L782.8 535.6 L783.6 567.5 L784.5 586.4 L785.3 603.2 L786.1 614.8 L787.4 594.8 L788.7 573.8 L789.7 571.7 L790.8 605.3 L792.0 588.5 L793.3 573.8 L794.5 567.5 L795.8 578.0 L797.1 572.8 L798.5 561.2 L799.8 554.9 L800.0 547.8 L801.8 550.0 L803.3 567.5 L804.8 556.6 L806.6 578.4 L808.3 602.5 L809.8 614.5 L811.4 598.1 L812.7 580.6 L814.2 577.3 L815.8 602.5 L817.1 624.4 L818.4 635.3 L820.1 624.4 L821.9 621.1 L823.4 624.4 L824.5 637.1 L825.8 620.0 L827.3 610.2 L828.9 613.4 L830.2 602.5 L831.7 591.6 L833.3 604.7 L834.6 617.8 L836.1 622.2 L837.6 635.3 L838.9 634.2 L839.8 580.6 L840.7 566.4 L842.0 589.4 L843.3 595.9 L844.8 583.9 L846.4 590.5 L847.7 585.0 L849.2 594.9 L850.8 602.5 L852.1 590.5 L853.4 611.3 L854.7 598.1 L856.4 579.5 L858.0 593.8 L859.5 600.3 L861.3 611.3 L862.6 627.7 L863.9 617.8 L865.2 610.2 L866.7 622.2 L868.3 606.9 L869.6 571.9 L870.9 555.5 L872.6 560.9 L873.9 556.6 L875.5 580.6 L877.0 558.8 L878.3 582.8 L879.9 591.6 L881.4 602.5 L883.1 613.4 L884.9 624.4 L886.6 637.1 L887.9 624.4 L889.7 602.5 L891.4 612.4 L893.0 624.4 L894.5 591.6 L895.8 565.3 L897.4 571.9 L898.9 591.6 L900.2 606.9 L901.7 567.5 L902.8 552.2 L904.6 551.1 L906.1 580.6 L907.6 550.0 L909.4 539.1 L910.7 556.6 L912.0 557.7 L913.3 585.0 L914.2 604.7 L915.5 587.2 L917.0 580.6 L918.1 574.1 L919.9 591.6 L921.4 578.4 L922.9 563.1 L924.7 546.7 L926.9 547.8 L929.1 536.9 L931.3 527.7 L936.1 526.4 L937.4 547.8 L938.7 555.5 L940.0 567.5 L941.1 548.9 L942.2 569.7 L943.3 591.6 L944.4 606.9 L945.7 614.5 L946.6 602.5 L947.7 571.9 L948.3 565.8 L949.2 570.8 L949.2 549.5z" fill="#b5dcb9" clip-path="url(#ctop)"/>
<path d="M19.3 631.5 L19.3 652.0 L19.5 631.2 L20.0 628.4 L21.0 601.1 L22.1 620.0 L23.1 607.4 L25.2 588.5 L27.3 585.4 L29.4 587.5 L31.5 599.0 L33.6 611.6 L35.7 614.8 L36.8 624.2 L37.8 599.0 L38.9 571.7 L39.9 569.6 L41.0 557.0 L42.0 546.5 L43.1 567.5 L44.1 599.0 L45.2 603.2 L47.3 592.7 L47.9 613.7 L49.4 588.5 L51.5 586.4 L53.6 580.1 L55.7 561.2 L57.8 550.7 L59.5 545.5 L60.5 571.7 L64.1 572.8 L65.5 550.7 L67.2 527.6 L68.9 523.4 L70.4 536.0 L72.5 538.1 L73.9 536.0 L75.2 552.8 L77.3 553.9 L78.4 599.0 L79.4 581.2 L80.9 586.4 L82.4 591.7 L84.0 584.3 L85.7 592.7 L87.2 578.0 L88.7 586.4 L89.9 567.5 L91.0 558.1 L92.0 575.9 L93.5 594.8 L94.5 586.4 L95.8 613.7 L97.1 588.5 L98.3 578.0 L99.2 594.8 L100.4 575.9 L101.7 596.9 L102.9 580.1 L104.2 596.9 L105.5 586.4 L106.7 598.0 L108.2 594.8 L109.7 584.3 L111.3 586.4 L113.0 603.2 L114.5 633.7 L116.6 622.1 L118.1 623.2 L119.3 630.5 L120.8 626.3 L122.3 628.4 L123.9 638.9 L127.1 643.6 L128.6 632.6 L130.3 605.3 L131.5 596.9 L132.8 601.1 L134.5 620.0 L136.1 634.7 L137.2 642.1 L138.7 609.5 L139.7 601.1 L141.2 573.8 L142.4 550.7 L144.5 544.4 L146.0 548.6 L148.1 560.2 L149.6 548.6 L150.8 557.0 L152.9 556.0 L155.5 551.8 L158.0 549.7 L159.2 561.2 L160.7 584.3 L162.2 620.0 L163.4 610.6 L164.9 624.2 L166.4 631.6 L167.6 596.9 L169.1 599.0 L170.6 609.5 L172.3 622.1 L173.5 599.0 L174.8 561.2 L176.5 548.6 L178.6 536.0 L179.8 544.4 L181.1 569.6 L182.4 584.3 L183.8 575.9 L185.3 566.5 L187.0 582.2 L188.7 611.6 L190.1 635.8 L191.6 592.7 L193.3 584.3 L195.4 575.9 L197.5 552.8 L199.2 567.5 L200.0 567.5 L201.1 542.3 L202.5 552.8 L204.2 540.2 L207.4 529.7 L210.5 525.1 L216.8 524.5 L220.0 527.6 L222.1 525.5 L223.5 536.0 L225.2 528.7 L226.9 546.5 L227.9 535.0 L229.0 557.0 L230.0 583.3 L231.5 562.3 L233.2 566.5 L235.7 557.0 L237.8 544.4 L241.0 535.0 L244.1 531.8 L246.2 529.3 L247.9 542.3 L248.9 537.1 L250.0 567.5 L250.8 595.9 L252.1 566.5 L254.2 565.4 L255.7 574.9 L257.1 575.9 L258.8 563.3 L260.5 559.1 L261.6 578.0 L262.4 602.2 L263.7 573.8 L265.1 551.8 L266.4 569.6 L267.2 582.2 L269.3 563.3 L271.4 559.1 L273.1 596.9 L274.8 580.1 L276.5 569.6 L277.7 579.1 L279.4 567.5 L280.9 598.0 L281.9 610.6 L283.6 594.8 L285.1 569.6 L286.6 549.7 L288.2 542.3 L290.8 531.4 L291.8 557.0 L292.9 584.3 L294.1 609.5 L295.6 607.4 L297.1 609.5 L298.7 615.8 L300.8 621.1 L302.5 619.0 L303.4 625.3 L304.6 599.0 L306.1 584.3 L308.2 566.5 L309.2 575.9 L310.5 593.8 L311.8 586.4 L313.4 605.3 L315.1 620.0 L316.2 619.0 L317.2 584.3 L318.1 562.3 L319.3 569.6 L320.6 582.2 L322.3 563.3 L324.4 554.9 L326.1 577.0 L327.7 575.9 L329.2 587.5 L330.7 574.9 L332.4 574.9 L334.0 588.5 L334.9 615.8 L336.1 636.8 L337.4 650.5 L338.7 624.2 L339.7 603.2 L341.2 588.5 L342.9 580.1 L345.0 569.6 L347.1 557.0 L349.6 546.5 L350.6 569.6 L351.7 593.8 L352.9 578.0 L354.4 584.3 L355.9 587.5 L357.6 596.9 L358.8 573.8 L360.1 557.0 L361.8 552.8 L363.9 546.5 L365.5 535.0 L367.0 550.7 L368.1 556.0 L369.3 544.4 L371.2 541.3 L372.7 541.3 L373.9 549.7 L375.0 578.0 L376.1 593.8 L377.5 595.9 L378.6 602.2 L380.3 584.3 L382.4 583.3 L384.9 583.3 L386.6 594.8 L388.0 594.8 L389.1 562.3 L390.1 535.0 L391.2 569.6 L392.4 596.9 L393.7 586.4 L395.4 599.0 L396.8 608.5 L398.5 603.2 L400.0 599.0 L401.7 613.7 L403.8 619.0 L405.3 609.5 L407.4 627.4 L408.8 599.0 L410.1 568.6 L412.2 567.5 L413.7 584.3 L415.1 603.2 L416.4 611.6 L417.4 594.8 L418.5 622.1 L419.7 599.0 L421.0 580.1 L422.7 571.7 L424.2 594.8 L425.6 613.7 L427.3 599.0 L429.0 594.8 L430.5 613.7 L431.9 626.3 L433.2 627.4 L434.2 599.0 L435.7 582.2 L437.4 588.5 L438.9 582.2 L440.3 607.4 L443.1 607.4 L444.5 590.6 L445.8 563.3 L448.7 562.3 L450.4 538.1 L451.7 563.3 L452.5 586.4 L453.8 609.5 L455.7 629.5 L457.1 613.7 L458.8 584.3 L460.1 586.4 L461.3 556.0 L462.6 571.7 L464.1 599.0 L465.5 603.2 L466.8 595.9 L468.3 609.5 L469.7 599.0 L471.4 608.5 L473.1 590.6 L474.6 570.0 L476.7 571.7 L478.2 580.1 L479.4 599.0 L480.9 603.2 L482.4 611.6 L484.0 584.3 L485.7 559.1 L487.2 547.6 L488.2 557.0 L489.5 588.5 L490.3 578.0 L491.4 599.0 L492.0 623.2 L493.5 599.0 L495.0 588.5 L495.8 607.4 L497.1 578.0 L498.3 567.5 L499.6 584.3 L500.8 593.8 L502.5 585.4 L504.6 586.4 L506.1 592.7 L507.6 595.9 L508.8 588.5 L509.7 609.5 L510.9 568.6 L512.4 578.0 L513.4 594.8 L514.5 601.1 L515.5 562.3 L517.6 562.3 L519.3 578.0 L520.8 568.6 L527.1 568.6 L528.2 586.4 L529.4 557.0 L530.7 531.8 L531.9 532.2 L532.8 567.5 L534.0 584.3 L535.1 575.9 L536.6 599.0 L538.2 584.3 L539.7 573.8 L541.2 578.0 L542.9 598.0 L544.5 584.3 L546.0 557.0 L548.1 536.0 L549.2 548.6 L550.4 542.3 L551.7 550.7 L552.9 552.8 L554.4 545.5 L555.9 557.0 L557.6 550.7 L559.2 542.3 L560.9 538.1 L561.8 565.4 L562.8 584.3 L564.3 567.5 L565.5 584.3 L567.0 565.4 L568.5 552.8 L571.8 552.4 L573.3 542.3 L574.8 535.0 L576.5 541.3 L578.6 536.0 L581.1 526.6 L583.2 526.6 L584.5 542.3 L585.3 553.9 L586.1 535.0 L587.4 546.5 L588.7 556.0 L591.2 565.4 L592.9 584.3 L594.3 620.0 L595.8 599.0 L597.1 578.0 L598.5 588.5 L600.0 631.6 L601.1 624.2 L602.1 650.5 L603.2 620.0 L604.2 601.1 L605.9 586.4 L607.4 581.2 L608.8 594.8 L610.5 593.8 L612.2 594.8 L613.7 584.3 L615.1 596.9 L616.4 563.3 L618.5 559.1 L620.0 567.5 L621.0 554.9 L622.7 549.7 L624.8 548.6 L626.3 545.5 L627.9 556.0 L630.5 557.0 L631.9 553.9 L633.2 569.6 L634.2 589.6 L635.7 569.6 L637.4 550.7 L638.9 542.3 L640.5 535.0 L641.6 557.0 L642.4 577.0 L643.7 557.0 L645.2 546.5 L646.6 535.0 L649.4 530.8 L652.5 526.6 L655.7 525.1 L657.1 538.1 L658.8 550.7 L660.1 557.0 L661.3 575.9 L663.0 590.6 L664.7 594.8 L666.4 602.2 L667.6 578.0 L668.9 590.6 L670.4 575.9 L671.4 570.7 L672.7 586.4 L674.4 595.9 L676.1 588.5 L677.7 594.8 L679.4 615.8 L680.7 632.6 L681.9 603.2 L683.2 582.2 L685.1 562.3 L687.2 549.7 L688.7 541.3 L690.3 546.5 L692.0 542.3 L693.5 536.0 L695.0 553.9 L697.1 551.8 L698.3 536.0 L699.8 527.6 L702.9 523.8 L703.8 546.5 L705.0 565.4 L706.7 580.1 L708.4 592.7 L709.7 603.2 L710.9 614.8 L712.4 591.7 L713.9 594.8 L715.5 605.3 L716.8 608.5 L718.1 602.2 L719.7 601.1 L721.4 608.5 L722.7 615.8 L723.9 622.1 L725.2 607.4 L726.5 600.1 L727.3 609.5 L728.6 574.9 L729.4 594.8 L730.3 608.5 L731.3 575.9 L732.8 580.1 L734.5 564.4 L736.6 556.0 L738.2 540.2 L739.9 541.3 L741.2 552.8 L742.4 557.0 L743.9 535.0 L746.0 530.1 L747.1 548.6 L748.1 565.4 L749.6 561.2 L750.8 588.5 L752.3 589.6 L753.8 578.0 L755.5 566.5 L756.5 584.3 L757.6 602.2 L759.2 610.6 L760.9 615.8 L762.2 620.0 L763.9 635.8 L765.5 624.2 L767.0 611.6 L768.5 590.6 L770.2 567.5 L771.8 548.6 L773.3 541.3 L774.8 539.8 L776.1 549.7 L776.9 554.9 L778.2 544.4 L779.6 539.2 L781.1 536.0 L782.8 535.6 L783.6 567.5 L784.5 586.4 L785.3 603.2 L786.1 614.8 L787.4 594.8 L788.7 573.8 L789.7 571.7 L790.8 605.3 L792.0 588.5 L793.3 573.8 L794.5 567.5 L795.8 578.0 L797.1 572.8 L798.5 561.2 L799.8 554.9 L800.0 547.8 L801.8 550.0 L803.3 567.5 L804.8 556.6 L806.6 578.4 L808.3 602.5 L809.8 614.5 L811.4 598.1 L812.7 580.6 L814.2 577.3 L815.8 602.5 L817.1 624.4 L818.4 635.3 L820.1 624.4 L821.9 621.1 L823.4 624.4 L824.5 637.1 L825.8 620.0 L827.3 610.2 L828.9 613.4 L830.2 602.5 L831.7 591.6 L833.3 604.7 L834.6 617.8 L836.1 622.2 L837.6 635.3 L838.9 634.2 L839.8 580.6 L840.7 566.4 L842.0 589.4 L843.3 595.9 L844.8 583.9 L846.4 590.5 L847.7 585.0 L849.2 594.9 L850.8 602.5 L852.1 590.5 L853.4 611.3 L854.7 598.1 L856.4 579.5 L858.0 593.8 L859.5 600.3 L861.3 611.3 L862.6 627.7 L863.9 617.8 L865.2 610.2 L866.7 622.2 L868.3 606.9 L869.6 571.9 L870.9 555.5 L872.6 560.9 L873.9 556.6 L875.5 580.6 L877.0 558.8 L878.3 582.8 L879.9 591.6 L881.4 602.5 L883.1 613.4 L884.9 624.4 L886.6 637.1 L887.9 624.4 L889.7 602.5 L891.4 612.4 L893.0 624.4 L894.5 591.6 L895.8 565.3 L897.4 571.9 L898.9 591.6 L900.2 606.9 L901.7 567.5 L902.8 552.2 L904.6 551.1 L906.1 580.6 L907.6 550.0 L909.4 539.1 L910.7 556.6 L912.0 557.7 L913.3 585.0 L914.2 604.7 L915.5 587.2 L917.0 580.6 L918.1 574.1 L919.9 591.6 L921.4 578.4 L922.9 563.1 L924.7 546.7 L926.9 547.8 L929.1 536.9 L931.3 527.7 L936.1 526.4 L937.4 547.8 L938.7 555.5 L940.0 567.5 L941.1 548.9 L942.2 569.7 L943.3 591.6 L944.4 606.9 L945.7 614.5 L946.6 602.5 L947.7 571.9 L948.3 565.8 L949.2 570.8 L949.2 631.5z" fill="#b5dcb9" clip-path="url(#cbot)"/>
<rect x="13" y="631.45" width="6.3" height="20.549999999999955" fill="#b5dcb9"/>
<path d="M0 549.5H1018" stroke="#d4353f" stroke-width="1.1" stroke-dasharray="4.5 2" fill="none"/>
<path d="M0 631.45H1018" stroke="#d95f69" stroke-width="0.85" stroke-dasharray="4.3 2.1" fill="none"/>
<path d="M19.3 652.0 L19.5 631.2 L20.0 628.4 L21.0 601.1 L22.1 620.0 L23.1 607.4 L25.2 588.5 L27.3 585.4 L29.4 587.5 L31.5 599.0 L33.6 611.6 L35.7 614.8 L36.8 624.2 L37.8 599.0 L38.9 571.7 L39.9 569.6 L41.0 557.0 L42.0 546.5 L43.1 567.5 L44.1 599.0 L45.2 603.2 L47.3 592.7 L47.9 613.7 L49.4 588.5 L51.5 586.4 L53.6 580.1 L55.7 561.2 L57.8 550.7 L59.5 545.5 L60.5 571.7 L64.1 572.8 L65.5 550.7 L67.2 527.6 L68.9 523.4 L70.4 536.0 L72.5 538.1 L73.9 536.0 L75.2 552.8 L77.3 553.9 L78.4 599.0 L79.4 581.2 L80.9 586.4 L82.4 591.7 L84.0 584.3 L85.7 592.7 L87.2 578.0 L88.7 586.4 L89.9 567.5 L91.0 558.1 L92.0 575.9 L93.5 594.8 L94.5 586.4 L95.8 613.7 L97.1 588.5 L98.3 578.0 L99.2 594.8 L100.4 575.9 L101.7 596.9 L102.9 580.1 L104.2 596.9 L105.5 586.4 L106.7 598.0 L108.2 594.8 L109.7 584.3 L111.3 586.4 L113.0 603.2 L114.5 633.7 L116.6 622.1 L118.1 623.2 L119.3 630.5 L120.8 626.3 L122.3 628.4 L123.9 638.9 L127.1 643.6 L128.6 632.6 L130.3 605.3 L131.5 596.9 L132.8 601.1 L134.5 620.0 L136.1 634.7 L137.2 642.1 L138.7 609.5 L139.7 601.1 L141.2 573.8 L142.4 550.7 L144.5 544.4 L146.0 548.6 L148.1 560.2 L149.6 548.6 L150.8 557.0 L152.9 556.0 L155.5 551.8 L158.0 549.7 L159.2 561.2 L160.7 584.3 L162.2 620.0 L163.4 610.6 L164.9 624.2 L166.4 631.6 L167.6 596.9 L169.1 599.0 L170.6 609.5 L172.3 622.1 L173.5 599.0 L174.8 561.2 L176.5 548.6 L178.6 536.0 L179.8 544.4 L181.1 569.6 L182.4 584.3 L183.8 575.9 L185.3 566.5 L187.0 582.2 L188.7 611.6 L190.1 635.8 L191.6 592.7 L193.3 584.3 L195.4 575.9 L197.5 552.8 L199.2 567.5 L200.0 567.5 L201.1 542.3 L202.5 552.8 L204.2 540.2 L207.4 529.7 L210.5 525.1 L216.8 524.5 L220.0 527.6 L222.1 525.5 L223.5 536.0 L225.2 528.7 L226.9 546.5 L227.9 535.0 L229.0 557.0 L230.0 583.3 L231.5 562.3 L233.2 566.5 L235.7 557.0 L237.8 544.4 L241.0 535.0 L244.1 531.8 L246.2 529.3 L247.9 542.3 L248.9 537.1 L250.0 567.5 L250.8 595.9 L252.1 566.5 L254.2 565.4 L255.7 574.9 L257.1 575.9 L258.8 563.3 L260.5 559.1 L261.6 578.0 L262.4 602.2 L263.7 573.8 L265.1 551.8 L266.4 569.6 L267.2 582.2 L269.3 563.3 L271.4 559.1 L273.1 596.9 L274.8 580.1 L276.5 569.6 L277.7 579.1 L279.4 567.5 L280.9 598.0 L281.9 610.6 L283.6 594.8 L285.1 569.6 L286.6 549.7 L288.2 542.3 L290.8 531.4 L291.8 557.0 L292.9 584.3 L294.1 609.5 L295.6 607.4 L297.1 609.5 L298.7 615.8 L300.8 621.1 L302.5 619.0 L303.4 625.3 L304.6 599.0 L306.1 584.3 L308.2 566.5 L309.2 575.9 L310.5 593.8 L311.8 586.4 L313.4 605.3 L315.1 620.0 L316.2 619.0 L317.2 584.3 L318.1 562.3 L319.3 569.6 L320.6 582.2 L322.3 563.3 L324.4 554.9 L326.1 577.0 L327.7 575.9 L329.2 587.5 L330.7 574.9 L332.4 574.9 L334.0 588.5 L334.9 615.8 L336.1 636.8 L337.4 650.5 L338.7 624.2 L339.7 603.2 L341.2 588.5 L342.9 580.1 L345.0 569.6 L347.1 557.0 L349.6 546.5 L350.6 569.6 L351.7 593.8 L352.9 578.0 L354.4 584.3 L355.9 587.5 L357.6 596.9 L358.8 573.8 L360.1 557.0 L361.8 552.8 L363.9 546.5 L365.5 535.0 L367.0 550.7 L368.1 556.0 L369.3 544.4 L371.2 541.3 L372.7 541.3 L373.9 549.7 L375.0 578.0 L376.1 593.8 L377.5 595.9 L378.6 602.2 L380.3 584.3 L382.4 583.3 L384.9 583.3 L386.6 594.8 L388.0 594.8 L389.1 562.3 L390.1 535.0 L391.2 569.6 L392.4 596.9 L393.7 586.4 L395.4 599.0 L396.8 608.5 L398.5 603.2 L400.0 599.0 L401.7 613.7 L403.8 619.0 L405.3 609.5 L407.4 627.4 L408.8 599.0 L410.1 568.6 L412.2 567.5 L413.7 584.3 L415.1 603.2 L416.4 611.6 L417.4 594.8 L418.5 622.1 L419.7 599.0 L421.0 580.1 L422.7 571.7 L424.2 594.8 L425.6 613.7 L427.3 599.0 L429.0 594.8 L430.5 613.7 L431.9 626.3 L433.2 627.4 L434.2 599.0 L435.7 582.2 L437.4 588.5 L438.9 582.2 L440.3 607.4 L443.1 607.4 L444.5 590.6 L445.8 563.3 L448.7 562.3 L450.4 538.1 L451.7 563.3 L452.5 586.4 L453.8 609.5 L455.7 629.5 L457.1 613.7 L458.8 584.3 L460.1 586.4 L461.3 556.0 L462.6 571.7 L464.1 599.0 L465.5 603.2 L466.8 595.9 L468.3 609.5 L469.7 599.0 L471.4 608.5 L473.1 590.6 L474.6 570.0 L476.7 571.7 L478.2 580.1 L479.4 599.0 L480.9 603.2 L482.4 611.6 L484.0 584.3 L485.7 559.1 L487.2 547.6 L488.2 557.0 L489.5 588.5 L490.3 578.0 L491.4 599.0 L492.0 623.2 L493.5 599.0 L495.0 588.5 L495.8 607.4 L497.1 578.0 L498.3 567.5 L499.6 584.3 L500.8 593.8 L502.5 585.4 L504.6 586.4 L506.1 592.7 L507.6 595.9 L508.8 588.5 L509.7 609.5 L510.9 568.6 L512.4 578.0 L513.4 594.8 L514.5 601.1 L515.5 562.3 L517.6 562.3 L519.3 578.0 L520.8 568.6 L527.1 568.6 L528.2 586.4 L529.4 557.0 L530.7 531.8 L531.9 532.2 L532.8 567.5 L534.0 584.3 L535.1 575.9 L536.6 599.0 L538.2 584.3 L539.7 573.8 L541.2 578.0 L542.9 598.0 L544.5 584.3 L546.0 557.0 L548.1 536.0 L549.2 548.6 L550.4 542.3 L551.7 550.7 L552.9 552.8 L554.4 545.5 L555.9 557.0 L557.6 550.7 L559.2 542.3 L560.9 538.1 L561.8 565.4 L562.8 584.3 L564.3 567.5 L565.5 584.3 L567.0 565.4 L568.5 552.8 L571.8 552.4 L573.3 542.3 L574.8 535.0 L576.5 541.3 L578.6 536.0 L581.1 526.6 L583.2 526.6 L584.5 542.3 L585.3 553.9 L586.1 535.0 L587.4 546.5 L588.7 556.0 L591.2 565.4 L592.9 584.3 L594.3 620.0 L595.8 599.0 L597.1 578.0 L598.5 588.5 L600.0 631.6 L601.1 624.2 L602.1 650.5 L603.2 620.0 L604.2 601.1 L605.9 586.4 L607.4 581.2 L608.8 594.8 L610.5 593.8 L612.2 594.8 L613.7 584.3 L615.1 596.9 L616.4 563.3 L618.5 559.1 L620.0 567.5 L621.0 554.9 L622.7 549.7 L624.8 548.6 L626.3 545.5 L627.9 556.0 L630.5 557.0 L631.9 553.9 L633.2 569.6 L634.2 589.6 L635.7 569.6 L637.4 550.7 L638.9 542.3 L640.5 535.0 L641.6 557.0 L642.4 577.0 L643.7 557.0 L645.2 546.5 L646.6 535.0 L649.4 530.8 L652.5 526.6 L655.7 525.1 L657.1 538.1 L658.8 550.7 L660.1 557.0 L661.3 575.9 L663.0 590.6 L664.7 594.8 L666.4 602.2 L667.6 578.0 L668.9 590.6 L670.4 575.9 L671.4 570.7 L672.7 586.4 L674.4 595.9 L676.1 588.5 L677.7 594.8 L679.4 615.8 L680.7 632.6 L681.9 603.2 L683.2 582.2 L685.1 562.3 L687.2 549.7 L688.7 541.3 L690.3 546.5 L692.0 542.3 L693.5 536.0 L695.0 553.9 L697.1 551.8 L698.3 536.0 L699.8 527.6 L702.9 523.8 L703.8 546.5 L705.0 565.4 L706.7 580.1 L708.4 592.7 L709.7 603.2 L710.9 614.8 L712.4 591.7 L713.9 594.8 L715.5 605.3 L716.8 608.5 L718.1 602.2 L719.7 601.1 L721.4 608.5 L722.7 615.8 L723.9 622.1 L725.2 607.4 L726.5 600.1 L727.3 609.5 L728.6 574.9 L729.4 594.8 L730.3 608.5 L731.3 575.9 L732.8 580.1 L734.5 564.4 L736.6 556.0 L738.2 540.2 L739.9 541.3 L741.2 552.8 L742.4 557.0 L743.9 535.0 L746.0 530.1 L747.1 548.6 L748.1 565.4 L749.6 561.2 L750.8 588.5 L752.3 589.6 L753.8 578.0 L755.5 566.5 L756.5 584.3 L757.6 602.2 L759.2 610.6 L760.9 615.8 L762.2 620.0 L763.9 635.8 L765.5 624.2 L767.0 611.6 L768.5 590.6 L770.2 567.5 L771.8 548.6 L773.3 541.3 L774.8 539.8 L776.1 549.7 L776.9 554.9 L778.2 544.4 L779.6 539.2 L781.1 536.0 L782.8 535.6 L783.6 567.5 L784.5 586.4 L785.3 603.2 L786.1 614.8 L787.4 594.8 L788.7 573.8 L789.7 571.7 L790.8 605.3 L792.0 588.5 L793.3 573.8 L794.5 567.5 L795.8 578.0 L797.1 572.8 L798.5 561.2 L799.8 554.9 L800.0 547.8 L801.8 550.0 L803.3 567.5 L804.8 556.6 L806.6 578.4 L808.3 602.5 L809.8 614.5 L811.4 598.1 L812.7 580.6 L814.2 577.3 L815.8 602.5 L817.1 624.4 L818.4 635.3 L820.1 624.4 L821.9 621.1 L823.4 624.4 L824.5 637.1 L825.8 620.0 L827.3 610.2 L828.9 613.4 L830.2 602.5 L831.7 591.6 L833.3 604.7 L834.6 617.8 L836.1 622.2 L837.6 635.3 L838.9 634.2 L839.8 580.6 L840.7 566.4 L842.0 589.4 L843.3 595.9 L844.8 583.9 L846.4 590.5 L847.7 585.0 L849.2 594.9 L850.8 602.5 L852.1 590.5 L853.4 611.3 L854.7 598.1 L856.4 579.5 L858.0 593.8 L859.5 600.3 L861.3 611.3 L862.6 627.7 L863.9 617.8 L865.2 610.2 L866.7 622.2 L868.3 606.9 L869.6 571.9 L870.9 555.5 L872.6 560.9 L873.9 556.6 L875.5 580.6 L877.0 558.8 L878.3 582.8 L879.9 591.6 L881.4 602.5 L883.1 613.4 L884.9 624.4 L886.6 637.1 L887.9 624.4 L889.7 602.5 L891.4 612.4 L893.0 624.4 L894.5 591.6 L895.8 565.3 L897.4 571.9 L898.9 591.6 L900.2 606.9 L901.7 567.5 L902.8 552.2 L904.6 551.1 L906.1 580.6 L907.6 550.0 L909.4 539.1 L910.7 556.6 L912.0 557.7 L913.3 585.0 L914.2 604.7 L915.5 587.2 L917.0 580.6 L918.1 574.1 L919.9 591.6 L921.4 578.4 L922.9 563.1 L924.7 546.7 L926.9 547.8 L929.1 536.9 L931.3 527.7 L936.1 526.4 L937.4 547.8 L938.7 555.5 L940.0 567.5 L941.1 548.9 L942.2 569.7 L943.3 591.6 L944.4 606.9 L945.7 614.5 L946.6 602.5 L947.7 571.9 L948.3 565.8 L949.2 570.8" stroke="#d9752e" stroke-width="0.8" fill="none" stroke-linejoin="round" clip-path="url(#cpan)"/>
<path d="M68.5 583.3C69.2 582.1 71.1 577.8 72.5 575.9C73.8 574.1 75.3 572.5 76.7 572.1C78.1 571.8 79.3 572.9 80.9 573.8C82.5 574.7 84.2 576.8 86.1 577.6C88.1 578.4 90.3 577.7 92.4 578.4C94.5 579.1 96.6 581.1 98.7 581.8C100.8 582.5 102.9 582.1 105.0 582.6C107.1 583.2 109.2 583.3 111.3 585.4C113.4 587.4 115.5 591.9 117.6 594.8C119.7 597.8 122.0 600.9 123.9 603.2C125.9 605.6 127.8 608.4 129.2 609.1C130.6 609.8 131.0 606.8 132.4 607.4C133.8 608.0 135.9 613.0 137.6 612.7C139.4 612.3 140.9 608.7 142.9 605.3C144.8 602.0 147.1 596.2 149.2 592.7C151.3 589.2 153.7 586.4 155.5 584.3C157.2 582.3 157.9 579.8 159.7 580.5C161.4 581.2 164.2 586.8 166.0 588.5C167.7 590.2 168.9 589.8 170.2 590.6C171.4 591.5 171.9 594.7 173.3 593.8C174.7 592.9 177.0 587.2 178.6 585.4C180.1 583.5 181.4 583.0 182.8 582.6C184.2 582.3 185.6 582.5 187.0 583.3C188.4 584.1 189.8 587.1 191.2 587.5C192.6 587.8 194.0 586.3 195.4 585.4C196.8 584.5 198.8 582.8 199.6 582.2C200.4 581.6 199.2 582.7 200.0 581.8C200.8 580.9 202.5 579.5 204.2 577.0C206.0 574.4 208.4 569.8 210.5 566.5C212.6 563.1 214.7 559.9 216.8 557.0C218.9 554.1 221.4 550.4 223.1 549.0C224.9 547.6 225.9 548.3 227.3 548.6C228.7 549.0 229.9 550.5 231.5 551.1C233.1 551.8 235.0 552.6 236.8 552.4C238.5 552.1 240.3 550.6 242.0 549.7C243.8 548.8 245.7 546.9 247.3 546.9C248.8 546.9 249.7 548.3 251.5 549.7C253.2 551.0 255.7 553.3 257.8 554.9C259.9 556.6 261.8 558.2 264.1 559.5C266.4 560.9 269.0 561.7 271.4 562.9C273.9 564.1 276.7 564.8 278.8 566.5C280.9 568.1 282.5 572.3 284.0 572.8C285.6 573.2 287.0 570.3 288.2 569.2C289.5 568.2 290.2 566.1 291.4 566.5C292.6 566.9 294.0 569.4 295.6 571.7C297.2 574.0 299.3 577.7 300.8 580.1C302.4 582.5 303.6 585.3 305.0 586.0C306.4 586.7 307.8 584.3 309.2 584.3C310.6 584.4 312.1 585.6 313.4 586.4C314.8 587.3 315.8 589.4 317.2 589.6C318.6 589.8 320.2 588.4 321.8 587.5C323.5 586.5 325.4 584.7 327.1 583.9C328.9 583.1 330.8 581.7 332.4 582.6C333.9 583.6 335.2 587.8 336.6 589.6C337.9 591.4 338.9 593.0 340.3 593.4C341.7 593.7 343.1 593.4 345.0 591.7C346.8 590.0 349.3 584.3 351.3 583.3C353.2 582.2 354.8 585.9 356.5 585.4C358.3 584.9 359.8 582.3 361.8 580.1C363.7 577.9 366.0 574.3 368.1 572.1C370.1 570.0 372.2 567.2 373.9 567.1C375.7 567.0 376.8 570.0 378.6 571.3C380.4 572.6 383.3 573.9 384.9 574.9C386.4 575.8 387.1 576.9 388.0 577.0C388.9 577.1 389.1 575.3 390.1 575.5C391.2 575.7 392.8 576.8 394.3 578.0C395.9 579.3 398.6 582.1 399.6 582.9C400.5 583.6 399.2 581.9 400.0 582.6C400.8 583.4 402.8 586.0 404.2 587.5C405.6 589.0 407.0 591.5 408.4 591.7C409.8 591.9 410.9 588.4 412.6 588.5C414.4 588.6 417.2 592.0 418.9 592.3C420.7 592.6 421.5 590.1 423.1 590.2C424.7 590.3 426.6 591.5 428.4 592.7C430.1 593.9 431.9 596.9 433.6 597.4C435.4 597.8 437.1 595.5 438.9 595.3C440.6 595.0 442.0 597.3 444.1 595.9C446.2 594.5 449.2 587.4 451.5 586.8C453.7 586.3 456.0 592.2 457.8 592.7C459.5 593.3 460.4 590.3 462.0 590.2C463.6 590.1 465.5 591.7 467.2 592.3C469.0 592.9 470.7 594.2 472.5 593.8C474.2 593.3 476.0 589.8 477.7 589.6C479.5 589.3 481.1 592.8 483.0 592.3C484.9 591.8 487.2 586.8 489.3 586.4C491.4 586.0 493.7 589.7 495.6 590.0C497.5 590.3 498.9 588.4 500.8 588.1C502.8 587.9 505.0 588.5 507.1 588.5C509.2 588.6 511.3 589.2 513.4 588.5C515.5 587.9 517.6 586.0 519.7 584.7C521.8 583.5 523.9 582.7 526.1 581.2C528.2 579.6 530.3 576.2 532.4 575.5C534.5 574.8 536.6 576.6 538.7 577.0C540.8 577.4 542.9 578.9 545.0 578.0C547.1 577.1 549.2 573.6 551.3 571.7C553.4 569.8 555.8 567.8 557.6 566.5C559.3 565.1 560.2 563.7 561.8 563.7C563.3 563.7 565.1 566.6 567.0 566.5C568.9 566.3 571.2 564.5 573.3 562.9C575.4 561.3 577.7 558.8 579.6 557.0C581.5 555.3 583.3 553.3 584.9 552.4C586.4 551.5 587.7 551.2 589.1 551.8C590.5 552.4 591.9 554.2 593.3 556.0C594.7 557.7 596.4 560.4 597.5 562.3C598.5 564.1 599.2 566.4 599.6 567.1C600.0 567.8 599.6 565.4 600.0 566.5C600.4 567.6 601.1 571.9 602.1 573.8C603.2 575.7 604.2 576.7 606.3 578.0C608.4 579.4 612.3 582.0 614.7 581.8C617.2 581.6 618.9 578.7 621.0 577.0C623.1 575.3 625.2 573.1 627.3 571.7C629.4 570.3 631.2 569.6 633.6 568.6C636.1 567.5 639.2 567.2 642.0 565.4C644.8 563.7 648.0 560.4 650.4 558.1C652.9 555.7 655.0 551.8 656.7 551.1C658.5 550.4 659.5 552.5 660.9 553.9C662.3 555.2 663.4 557.2 665.1 559.1C666.9 561.0 669.3 563.1 671.4 565.4C673.5 567.7 675.8 570.7 677.7 572.8C679.7 574.9 681.2 577.7 683.0 578.0C684.7 578.4 686.3 576.4 688.2 574.9C690.2 573.3 692.6 570.7 694.5 568.6C696.5 566.5 698.1 564.1 699.8 562.3C701.5 560.4 703.0 557.3 704.6 557.4C706.2 557.5 707.4 560.5 709.2 562.9C711.1 565.3 713.4 569.0 715.5 571.7C717.6 574.4 719.7 576.8 721.8 579.1C723.9 581.4 726.2 584.5 728.2 585.4C730.1 586.3 731.7 585.4 733.4 584.3C735.2 583.3 736.7 581.4 738.7 579.1C740.6 576.8 743.2 572.4 745.0 570.7C746.7 568.9 747.4 568.4 749.2 568.6C750.9 568.7 753.4 569.6 755.5 571.7C757.6 573.8 759.7 578.2 761.8 581.2C763.9 584.2 766.1 588.9 768.1 589.6C770.0 590.3 771.6 587.7 773.3 585.4C775.1 583.1 777.0 578.5 778.6 575.9C780.1 573.4 781.4 570.2 782.8 570.0C784.2 569.9 785.2 573.6 787.0 574.9C788.7 576.1 791.2 577.6 793.3 577.6C795.4 577.6 798.5 575.5 799.6 574.9C800.7 574.3 799.0 574.6 800.0 574.1C801.0 573.6 803.6 571.5 805.5 571.9C807.3 572.2 809.1 574.4 810.9 576.3C812.8 578.1 814.6 580.4 816.4 582.8C818.2 585.2 820.1 587.9 821.9 590.5C823.7 593.0 825.5 596.3 827.3 598.1C829.2 600.0 830.9 600.3 832.8 601.4C834.7 602.5 837.1 604.7 838.9 604.7C840.8 604.7 841.9 602.3 843.8 601.4C845.7 600.5 848.1 599.6 850.3 599.2C852.5 598.9 854.9 598.9 856.9 599.2C858.9 599.6 860.6 600.6 862.3 601.4C864.1 602.3 865.7 604.8 867.4 604.3C869.0 603.7 870.5 600.2 872.2 598.1C873.9 596.0 875.8 592.1 877.7 591.6C879.5 591.0 881.3 593.4 883.1 594.9C885.0 596.3 886.9 598.9 888.6 600.3C890.4 601.8 892.0 603.8 893.6 603.6C895.3 603.4 896.7 601.0 898.4 599.2C900.2 597.4 902.1 594.9 903.9 592.7C905.7 590.5 907.7 587.7 909.4 586.1C911.0 584.5 912.0 583.2 913.8 582.8C915.5 582.5 917.9 584.6 919.9 583.9C921.9 583.2 923.9 580.6 925.8 578.4C927.7 576.3 929.4 573.5 931.3 570.8C933.1 568.1 935.3 563.6 936.7 562.0C938.2 560.5 938.9 560.8 940.0 561.4C941.1 561.9 942.3 564.0 943.3 565.3C944.3 566.6 945.2 568.5 946.1 569.3C947.1 570.0 948.7 569.6 949.2 569.7" stroke="#d8404f" stroke-width="0.9" fill="none" stroke-linejoin="round"/>
<text x="1019.3" y="548" font-size="8" fill="#3c3c3c" text-anchor="end">80</text>
<text x="1019.3" y="602" font-size="8" fill="#3c3c3c" text-anchor="end">40</text>
<text x="1019.3" y="629.6" font-size="8" fill="#3c3c3c" text-anchor="end">20</text>
<path d="M1000.5 564H1017.8Q1020 564 1020 566.2V574H1000.5Q998.5 574 996.8 569Q998.5 564 1000.5 564z" fill="#d8404f"/>
<path d="M1000.5 566H1017.8Q1020 566 1020 568.2V574.6Q1020 576.8 1017.8 576.8H1000.5Q998.5 576.8 996.7 571.4Q998.5 566 1000.5 566z" fill="#e07a32"/>
<text x="999.9" y="574.6" font-size="8" fill="#fff" textLength="20.4" lengthAdjust="spacingAndGlyphs" clip-path="url(#cright)" stroke="#fff" stroke-width="0.15">63,46</text>
<text x="348.2" y="14.8" font-size="8.3" fill="#333" stroke="#333" stroke-width="0.15" textLength="104.3" lengthAdjust="spacingAndGlyphs">ΤΡΑΠΕΖΑ OPTIMA BANK AE</text>
<path d="M117 2V22" stroke="#dadad8" stroke-width="1"/>
<path d="M38.5 0V1.4M118 0V1.4M140 0V1.4M161.5 0V1.4" stroke="#d4d4d2" stroke-width="1"/>
<path d="M872.5 3V22M893.2 22V5Q893.2 2.2 890.4 2.2" stroke="#cfcfcd" stroke-width="1" fill="none"/>
<path d="M879.8 11.2h6.2l-3.1 3.4z" fill="#444"/>
<text x="904.3" y="14.9" font-size="7.6" fill="#3c3c3c" stroke="#3c3c3c" stroke-width="0.3" text-anchor="middle">H</text>
<circle cx="926.8" cy="11" r="5.4" fill="none" stroke="#8c8c8c" stroke-width="0.8"/>
<path d="M923.9 9h2.3v2q0 1.7-1.9 2.2l-.4-.7q1-.4 1-1.2h-1zM927.3 9h2.3v2q0 1.7-1.9 2.2l-.4-.7q1-.4 1-1.2h-1z" fill="#7a7a7a"/>
<rect x="943.2" y="10.8" width="8.4" height="5.6" rx="1" fill="none" stroke="#8a8a8a" stroke-width="1"/>
<path d="M944.9 10.8V8.4Q944.9 5.9 947.5 5.9Q950.2 5.9 950.2 8.6V9.4" fill="none" stroke="#a2a2a2" stroke-width="1"/>
<rect x="946.9" y="12.6" width="1" height="1.8" fill="#777"/>
<path d="M964.5 9.6H973.8M964.5 13.5H973.8" stroke="#555" stroke-width="1.2"/>
<path d="M987.9 9.2h5.8v5.6h-5.8zM989.9 9.2V7.3h5.9v5.6h-2.1" fill="none" stroke="#666" stroke-width="0.9"/>
<path d="M1010.5 9.1L1015.5 14.1M1015.5 9.1L1010.5 14.1" stroke="#555" stroke-width="1" fill="none"/>
<rect x="1020.4" y="22.6" width="2.4" height="652" fill="#e2e2e0"/>
<rect x="1022.6" y="0" width="1.4" height="652" fill="#555"/>
<rect x="1022.2" y="0" width="0.5" height="652" fill="#999"/></svg>
</body></html>
